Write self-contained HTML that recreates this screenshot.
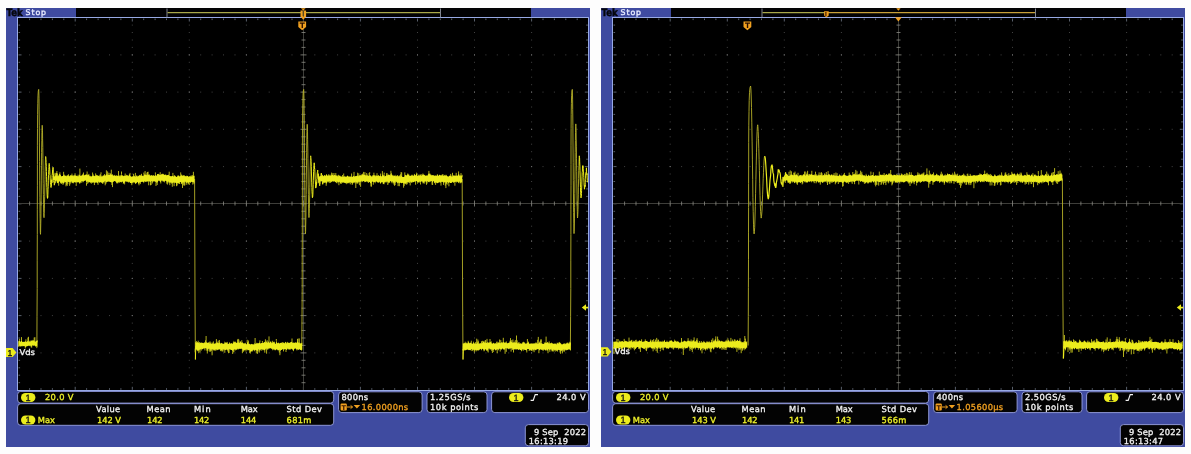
<!DOCTYPE html>
<html lang="en"><head><meta charset="utf-8"><title>Vds switching waveforms</title>
<style>
html,body{margin:0;padding:0;background:#fdfdfd;}
body{width:1191px;height:454px;overflow:hidden;font-family:"Liberation Sans","DejaVu Sans",sans-serif;}
svg{display:block;position:absolute;left:0;top:0;will-change:transform;}
</style></head><body>
<svg width="1191" height="454" viewBox="0 0 1191 454" text-rendering="geometricPrecision">
<g transform="translate(0,0)">
<rect x="6" y="8" width="584" height="439" fill="#3f4ba0"/>
<rect x="76" y="8" width="455" height="10" fill="#020204"/>
<rect x="17.5" y="17.5" width="571" height="373" fill="#000" stroke="#98aae6" stroke-width="1"/>
<text x="6.5" y="16.3" font-family="'DejaVu Sans','Liberation Sans',sans-serif" font-weight="bold" font-size="10.2" fill="#05060c" stroke="#05060c" stroke-width="0.45" textLength="16.2" lengthAdjust="spacingAndGlyphs">Tek</text>
<text x="25.6" y="15" font-family="'DejaVu Sans','Liberation Sans',sans-serif" font-size="7.8" fill="#e8ecff" stroke="#e8ecff" stroke-width="0.35" textLength="20.4" lengthAdjust="spacing">Stop</text>
<path d="M74.7 25.1h1M74.7 32.5h1M74.7 40h1M74.7 47.4h1M74.7 54.9h1M74.7 62.3h1M74.7 69.8h1M74.7 77.2h1M74.7 84.7h1M74.7 92.1h1M74.7 99.6h1M74.7 107h1M74.7 114.4h1M74.7 121.9h1M74.7 129.3h1M74.7 136.8h1M74.7 144.2h1M74.7 151.7h1M74.7 159.2h1M74.7 166.6h1M74.7 174h1M74.7 181.5h1M74.7 188.9h1M74.7 196.4h1M74.7 203.8h1M74.7 211.3h1M74.7 218.8h1M74.7 226.2h1M74.7 233.7h1M74.7 241.1h1M74.7 248.5h1M74.7 256h1M74.7 263.4h1M74.7 270.9h1M74.7 278.4h1M74.7 285.8h1M74.7 293.2h1M74.7 300.7h1M74.7 308.2h1M74.7 315.6h1M74.7 323.1h1M74.7 330.5h1M74.7 338h1M74.7 345.4h1M74.7 352.9h1M74.7 360.3h1M74.7 367.8h1M74.7 375.2h1M74.7 382.7h1M131.8 25.1h1M131.8 32.5h1M131.8 40h1M131.8 47.4h1M131.8 54.9h1M131.8 62.3h1M131.8 69.8h1M131.8 77.2h1M131.8 84.7h1M131.8 92.1h1M131.8 99.6h1M131.8 107h1M131.8 114.4h1M131.8 121.9h1M131.8 129.3h1M131.8 136.8h1M131.8 144.2h1M131.8 151.7h1M131.8 159.2h1M131.8 166.6h1M131.8 174h1M131.8 181.5h1M131.8 188.9h1M131.8 196.4h1M131.8 203.8h1M131.8 211.3h1M131.8 218.8h1M131.8 226.2h1M131.8 233.7h1M131.8 241.1h1M131.8 248.5h1M131.8 256h1M131.8 263.4h1M131.8 270.9h1M131.8 278.4h1M131.8 285.8h1M131.8 293.2h1M131.8 300.7h1M131.8 308.2h1M131.8 315.6h1M131.8 323.1h1M131.8 330.5h1M131.8 338h1M131.8 345.4h1M131.8 352.9h1M131.8 360.3h1M131.8 367.8h1M131.8 375.2h1M131.8 382.7h1M188.8 25.1h1M188.8 32.5h1M188.8 40h1M188.8 47.4h1M188.8 54.9h1M188.8 62.3h1M188.8 69.8h1M188.8 77.2h1M188.8 84.7h1M188.8 92.1h1M188.8 99.6h1M188.8 107h1M188.8 114.4h1M188.8 121.9h1M188.8 129.3h1M188.8 136.8h1M188.8 144.2h1M188.8 151.7h1M188.8 159.2h1M188.8 166.6h1M188.8 174h1M188.8 181.5h1M188.8 188.9h1M188.8 196.4h1M188.8 203.8h1M188.8 211.3h1M188.8 218.8h1M188.8 226.2h1M188.8 233.7h1M188.8 241.1h1M188.8 248.5h1M188.8 256h1M188.8 263.4h1M188.8 270.9h1M188.8 278.4h1M188.8 285.8h1M188.8 293.2h1M188.8 300.7h1M188.8 308.2h1M188.8 315.6h1M188.8 323.1h1M188.8 330.5h1M188.8 338h1M188.8 345.4h1M188.8 352.9h1M188.8 360.3h1M188.8 367.8h1M188.8 375.2h1M188.8 382.7h1M245.9 25.1h1M245.9 32.5h1M245.9 40h1M245.9 47.4h1M245.9 54.9h1M245.9 62.3h1M245.9 69.8h1M245.9 77.2h1M245.9 84.7h1M245.9 92.1h1M245.9 99.6h1M245.9 107h1M245.9 114.4h1M245.9 121.9h1M245.9 129.3h1M245.9 136.8h1M245.9 144.2h1M245.9 151.7h1M245.9 159.2h1M245.9 166.6h1M245.9 174h1M245.9 181.5h1M245.9 188.9h1M245.9 196.4h1M245.9 203.8h1M245.9 211.3h1M245.9 218.8h1M245.9 226.2h1M245.9 233.7h1M245.9 241.1h1M245.9 248.5h1M245.9 256h1M245.9 263.4h1M245.9 270.9h1M245.9 278.4h1M245.9 285.8h1M245.9 293.2h1M245.9 300.7h1M245.9 308.2h1M245.9 315.6h1M245.9 323.1h1M245.9 330.5h1M245.9 338h1M245.9 345.4h1M245.9 352.9h1M245.9 360.3h1M245.9 367.8h1M245.9 375.2h1M245.9 382.7h1M359.9 25.1h1M359.9 32.5h1M359.9 40h1M359.9 47.4h1M359.9 54.9h1M359.9 62.3h1M359.9 69.8h1M359.9 77.2h1M359.9 84.7h1M359.9 92.1h1M359.9 99.6h1M359.9 107h1M359.9 114.4h1M359.9 121.9h1M359.9 129.3h1M359.9 136.8h1M359.9 144.2h1M359.9 151.7h1M359.9 159.2h1M359.9 166.6h1M359.9 174h1M359.9 181.5h1M359.9 188.9h1M359.9 196.4h1M359.9 203.8h1M359.9 211.3h1M359.9 218.8h1M359.9 226.2h1M359.9 233.7h1M359.9 241.1h1M359.9 248.5h1M359.9 256h1M359.9 263.4h1M359.9 270.9h1M359.9 278.4h1M359.9 285.8h1M359.9 293.2h1M359.9 300.7h1M359.9 308.2h1M359.9 315.6h1M359.9 323.1h1M359.9 330.5h1M359.9 338h1M359.9 345.4h1M359.9 352.9h1M359.9 360.3h1M359.9 367.8h1M359.9 375.2h1M359.9 382.7h1M417 25.1h1M417 32.5h1M417 40h1M417 47.4h1M417 54.9h1M417 62.3h1M417 69.8h1M417 77.2h1M417 84.7h1M417 92.1h1M417 99.6h1M417 107h1M417 114.4h1M417 121.9h1M417 129.3h1M417 136.8h1M417 144.2h1M417 151.7h1M417 159.2h1M417 166.6h1M417 174h1M417 181.5h1M417 188.9h1M417 196.4h1M417 203.8h1M417 211.3h1M417 218.8h1M417 226.2h1M417 233.7h1M417 241.1h1M417 248.5h1M417 256h1M417 263.4h1M417 270.9h1M417 278.4h1M417 285.8h1M417 293.2h1M417 300.7h1M417 308.2h1M417 315.6h1M417 323.1h1M417 330.5h1M417 338h1M417 345.4h1M417 352.9h1M417 360.3h1M417 367.8h1M417 375.2h1M417 382.7h1M474 25.1h1M474 32.5h1M474 40h1M474 47.4h1M474 54.9h1M474 62.3h1M474 69.8h1M474 77.2h1M474 84.7h1M474 92.1h1M474 99.6h1M474 107h1M474 114.4h1M474 121.9h1M474 129.3h1M474 136.8h1M474 144.2h1M474 151.7h1M474 159.2h1M474 166.6h1M474 174h1M474 181.5h1M474 188.9h1M474 196.4h1M474 203.8h1M474 211.3h1M474 218.8h1M474 226.2h1M474 233.7h1M474 241.1h1M474 248.5h1M474 256h1M474 263.4h1M474 270.9h1M474 278.4h1M474 285.8h1M474 293.2h1M474 300.7h1M474 308.2h1M474 315.6h1M474 323.1h1M474 330.5h1M474 338h1M474 345.4h1M474 352.9h1M474 360.3h1M474 367.8h1M474 375.2h1M474 382.7h1M531.1 25.1h1M531.1 32.5h1M531.1 40h1M531.1 47.4h1M531.1 54.9h1M531.1 62.3h1M531.1 69.8h1M531.1 77.2h1M531.1 84.7h1M531.1 92.1h1M531.1 99.6h1M531.1 107h1M531.1 114.4h1M531.1 121.9h1M531.1 129.3h1M531.1 136.8h1M531.1 144.2h1M531.1 151.7h1M531.1 159.2h1M531.1 166.6h1M531.1 174h1M531.1 181.5h1M531.1 188.9h1M531.1 196.4h1M531.1 203.8h1M531.1 211.3h1M531.1 218.8h1M531.1 226.2h1M531.1 233.7h1M531.1 241.1h1M531.1 248.5h1M531.1 256h1M531.1 263.4h1M531.1 270.9h1M531.1 278.4h1M531.1 285.8h1M531.1 293.2h1M531.1 300.7h1M531.1 308.2h1M531.1 315.6h1M531.1 323.1h1M531.1 330.5h1M531.1 338h1M531.1 345.4h1M531.1 352.9h1M531.1 360.3h1M531.1 367.8h1M531.1 375.2h1M531.1 382.7h1M29.1 54.9h1M40.5 54.9h1M51.9 54.9h1M63.3 54.9h1M74.7 54.9h1M86.1 54.9h1M97.6 54.9h1M109 54.9h1M120.4 54.9h1M131.8 54.9h1M143.2 54.9h1M154.6 54.9h1M166 54.9h1M177.4 54.9h1M188.8 54.9h1M200.2 54.9h1M211.6 54.9h1M223 54.9h1M234.5 54.9h1M245.9 54.9h1M257.3 54.9h1M268.7 54.9h1M280.1 54.9h1M291.5 54.9h1M302.9 54.9h1M314.3 54.9h1M325.7 54.9h1M337.1 54.9h1M348.5 54.9h1M359.9 54.9h1M371.3 54.9h1M382.8 54.9h1M394.2 54.9h1M405.6 54.9h1M417 54.9h1M428.4 54.9h1M439.8 54.9h1M451.2 54.9h1M462.6 54.9h1M474 54.9h1M485.4 54.9h1M496.8 54.9h1M508.2 54.9h1M519.7 54.9h1M531.1 54.9h1M542.5 54.9h1M553.9 54.9h1M565.3 54.9h1M576.7 54.9h1M29.1 92.1h1M40.5 92.1h1M51.9 92.1h1M63.3 92.1h1M74.7 92.1h1M86.1 92.1h1M97.6 92.1h1M109 92.1h1M120.4 92.1h1M131.8 92.1h1M143.2 92.1h1M154.6 92.1h1M166 92.1h1M177.4 92.1h1M188.8 92.1h1M200.2 92.1h1M211.6 92.1h1M223 92.1h1M234.5 92.1h1M245.9 92.1h1M257.3 92.1h1M268.7 92.1h1M280.1 92.1h1M291.5 92.1h1M302.9 92.1h1M314.3 92.1h1M325.7 92.1h1M337.1 92.1h1M348.5 92.1h1M359.9 92.1h1M371.3 92.1h1M382.8 92.1h1M394.2 92.1h1M405.6 92.1h1M417 92.1h1M428.4 92.1h1M439.8 92.1h1M451.2 92.1h1M462.6 92.1h1M474 92.1h1M485.4 92.1h1M496.8 92.1h1M508.2 92.1h1M519.7 92.1h1M531.1 92.1h1M542.5 92.1h1M553.9 92.1h1M565.3 92.1h1M576.7 92.1h1M29.1 129.3h1M40.5 129.3h1M51.9 129.3h1M63.3 129.3h1M74.7 129.3h1M86.1 129.3h1M97.6 129.3h1M109 129.3h1M120.4 129.3h1M131.8 129.3h1M143.2 129.3h1M154.6 129.3h1M166 129.3h1M177.4 129.3h1M188.8 129.3h1M200.2 129.3h1M211.6 129.3h1M223 129.3h1M234.5 129.3h1M245.9 129.3h1M257.3 129.3h1M268.7 129.3h1M280.1 129.3h1M291.5 129.3h1M302.9 129.3h1M314.3 129.3h1M325.7 129.3h1M337.1 129.3h1M348.5 129.3h1M359.9 129.3h1M371.3 129.3h1M382.8 129.3h1M394.2 129.3h1M405.6 129.3h1M417 129.3h1M428.4 129.3h1M439.8 129.3h1M451.2 129.3h1M462.6 129.3h1M474 129.3h1M485.4 129.3h1M496.8 129.3h1M508.2 129.3h1M519.7 129.3h1M531.1 129.3h1M542.5 129.3h1M553.9 129.3h1M565.3 129.3h1M576.7 129.3h1M29.1 166.6h1M40.5 166.6h1M51.9 166.6h1M63.3 166.6h1M74.7 166.6h1M86.1 166.6h1M97.6 166.6h1M109 166.6h1M120.4 166.6h1M131.8 166.6h1M143.2 166.6h1M154.6 166.6h1M166 166.6h1M177.4 166.6h1M188.8 166.6h1M200.2 166.6h1M211.6 166.6h1M223 166.6h1M234.5 166.6h1M245.9 166.6h1M257.3 166.6h1M268.7 166.6h1M280.1 166.6h1M291.5 166.6h1M302.9 166.6h1M314.3 166.6h1M325.7 166.6h1M337.1 166.6h1M348.5 166.6h1M359.9 166.6h1M371.3 166.6h1M382.8 166.6h1M394.2 166.6h1M405.6 166.6h1M417 166.6h1M428.4 166.6h1M439.8 166.6h1M451.2 166.6h1M462.6 166.6h1M474 166.6h1M485.4 166.6h1M496.8 166.6h1M508.2 166.6h1M519.7 166.6h1M531.1 166.6h1M542.5 166.6h1M553.9 166.6h1M565.3 166.6h1M576.7 166.6h1M29.1 241.1h1M40.5 241.1h1M51.9 241.1h1M63.3 241.1h1M74.7 241.1h1M86.1 241.1h1M97.6 241.1h1M109 241.1h1M120.4 241.1h1M131.8 241.1h1M143.2 241.1h1M154.6 241.1h1M166 241.1h1M177.4 241.1h1M188.8 241.1h1M200.2 241.1h1M211.6 241.1h1M223 241.1h1M234.5 241.1h1M245.9 241.1h1M257.3 241.1h1M268.7 241.1h1M280.1 241.1h1M291.5 241.1h1M302.9 241.1h1M314.3 241.1h1M325.7 241.1h1M337.1 241.1h1M348.5 241.1h1M359.9 241.1h1M371.3 241.1h1M382.8 241.1h1M394.2 241.1h1M405.6 241.1h1M417 241.1h1M428.4 241.1h1M439.8 241.1h1M451.2 241.1h1M462.6 241.1h1M474 241.1h1M485.4 241.1h1M496.8 241.1h1M508.2 241.1h1M519.7 241.1h1M531.1 241.1h1M542.5 241.1h1M553.9 241.1h1M565.3 241.1h1M576.7 241.1h1M29.1 278.4h1M40.5 278.4h1M51.9 278.4h1M63.3 278.4h1M74.7 278.4h1M86.1 278.4h1M97.6 278.4h1M109 278.4h1M120.4 278.4h1M131.8 278.4h1M143.2 278.4h1M154.6 278.4h1M166 278.4h1M177.4 278.4h1M188.8 278.4h1M200.2 278.4h1M211.6 278.4h1M223 278.4h1M234.5 278.4h1M245.9 278.4h1M257.3 278.4h1M268.7 278.4h1M280.1 278.4h1M291.5 278.4h1M302.9 278.4h1M314.3 278.4h1M325.7 278.4h1M337.1 278.4h1M348.5 278.4h1M359.9 278.4h1M371.3 278.4h1M382.8 278.4h1M394.2 278.4h1M405.6 278.4h1M417 278.4h1M428.4 278.4h1M439.8 278.4h1M451.2 278.4h1M462.6 278.4h1M474 278.4h1M485.4 278.4h1M496.8 278.4h1M508.2 278.4h1M519.7 278.4h1M531.1 278.4h1M542.5 278.4h1M553.9 278.4h1M565.3 278.4h1M576.7 278.4h1M29.1 315.6h1M40.5 315.6h1M51.9 315.6h1M63.3 315.6h1M74.7 315.6h1M86.1 315.6h1M97.6 315.6h1M109 315.6h1M120.4 315.6h1M131.8 315.6h1M143.2 315.6h1M154.6 315.6h1M166 315.6h1M177.4 315.6h1M188.8 315.6h1M200.2 315.6h1M211.6 315.6h1M223 315.6h1M234.5 315.6h1M245.9 315.6h1M257.3 315.6h1M268.7 315.6h1M280.1 315.6h1M291.5 315.6h1M302.9 315.6h1M314.3 315.6h1M325.7 315.6h1M337.1 315.6h1M348.5 315.6h1M359.9 315.6h1M371.3 315.6h1M382.8 315.6h1M394.2 315.6h1M405.6 315.6h1M417 315.6h1M428.4 315.6h1M439.8 315.6h1M451.2 315.6h1M462.6 315.6h1M474 315.6h1M485.4 315.6h1M496.8 315.6h1M508.2 315.6h1M519.7 315.6h1M531.1 315.6h1M542.5 315.6h1M553.9 315.6h1M565.3 315.6h1M576.7 315.6h1M29.1 352.9h1M40.5 352.9h1M51.9 352.9h1M63.3 352.9h1M74.7 352.9h1M86.1 352.9h1M97.6 352.9h1M109 352.9h1M120.4 352.9h1M131.8 352.9h1M143.2 352.9h1M154.6 352.9h1M166 352.9h1M177.4 352.9h1M188.8 352.9h1M200.2 352.9h1M211.6 352.9h1M223 352.9h1M234.5 352.9h1M245.9 352.9h1M257.3 352.9h1M268.7 352.9h1M280.1 352.9h1M291.5 352.9h1M302.9 352.9h1M314.3 352.9h1M325.7 352.9h1M337.1 352.9h1M348.5 352.9h1M359.9 352.9h1M371.3 352.9h1M382.8 352.9h1M394.2 352.9h1M405.6 352.9h1M417 352.9h1M428.4 352.9h1M439.8 352.9h1M451.2 352.9h1M462.6 352.9h1M474 352.9h1M485.4 352.9h1M496.8 352.9h1M508.2 352.9h1M519.7 352.9h1M531.1 352.9h1M542.5 352.9h1M553.9 352.9h1M565.3 352.9h1M576.7 352.9h1" stroke="#424242" stroke-width="1" fill="none"/>
<path d="M74.7 54.9h1M74.7 92.1h1M74.7 129.3h1M74.7 166.6h1M74.7 203.8h1M74.7 241.1h1M74.7 278.4h1M74.7 315.6h1M74.7 352.9h1M131.8 54.9h1M131.8 92.1h1M131.8 129.3h1M131.8 166.6h1M131.8 203.8h1M131.8 241.1h1M131.8 278.4h1M131.8 315.6h1M131.8 352.9h1M188.8 54.9h1M188.8 92.1h1M188.8 129.3h1M188.8 166.6h1M188.8 203.8h1M188.8 241.1h1M188.8 278.4h1M188.8 315.6h1M188.8 352.9h1M245.9 54.9h1M245.9 92.1h1M245.9 129.3h1M245.9 166.6h1M245.9 203.8h1M245.9 241.1h1M245.9 278.4h1M245.9 315.6h1M245.9 352.9h1M302.9 54.9h1M302.9 92.1h1M302.9 129.3h1M302.9 166.6h1M302.9 203.8h1M302.9 241.1h1M302.9 278.4h1M302.9 315.6h1M302.9 352.9h1M359.9 54.9h1M359.9 92.1h1M359.9 129.3h1M359.9 166.6h1M359.9 203.8h1M359.9 241.1h1M359.9 278.4h1M359.9 315.6h1M359.9 352.9h1M417 54.9h1M417 92.1h1M417 129.3h1M417 166.6h1M417 203.8h1M417 241.1h1M417 278.4h1M417 315.6h1M417 352.9h1M474 54.9h1M474 92.1h1M474 129.3h1M474 166.6h1M474 203.8h1M474 241.1h1M474 278.4h1M474 315.6h1M474 352.9h1M531.1 54.9h1M531.1 92.1h1M531.1 129.3h1M531.1 166.6h1M531.1 203.8h1M531.1 241.1h1M531.1 278.4h1M531.1 315.6h1M531.1 352.9h1" stroke="#707070" stroke-width="1" fill="none"/>
<path d="M29.6 18.5v1.6M29.6 389.8v-1.6M18.5 25.1h1.6M587.8 25.1h-1.6M41 18.5v1.6M41 389.8v-1.6M18.5 32.5h1.6M587.8 32.5h-1.6M52.4 18.5v1.6M52.4 389.8v-1.6M18.5 40h1.6M587.8 40h-1.6M63.8 18.5v1.6M63.8 389.8v-1.6M18.5 47.4h1.6M587.8 47.4h-1.6M75.2 18.5v3M75.2 389.8v-3M18.5 54.9h3M587.8 54.9h-3M86.6 18.5v1.6M86.6 389.8v-1.6M18.5 62.3h1.6M587.8 62.3h-1.6M98.1 18.5v1.6M98.1 389.8v-1.6M18.5 69.8h1.6M587.8 69.8h-1.6M109.5 18.5v1.6M109.5 389.8v-1.6M18.5 77.2h1.6M587.8 77.2h-1.6M120.9 18.5v1.6M120.9 389.8v-1.6M18.5 84.7h1.6M587.8 84.7h-1.6M132.3 18.5v3M132.3 389.8v-3M18.5 92.1h3M587.8 92.1h-3M143.7 18.5v1.6M143.7 389.8v-1.6M18.5 99.6h1.6M587.8 99.6h-1.6M155.1 18.5v1.6M155.1 389.8v-1.6M18.5 107h1.6M587.8 107h-1.6M166.5 18.5v1.6M166.5 389.8v-1.6M18.5 114.4h1.6M587.8 114.4h-1.6M177.9 18.5v1.6M177.9 389.8v-1.6M18.5 121.9h1.6M587.8 121.9h-1.6M189.3 18.5v3M189.3 389.8v-3M18.5 129.3h3M587.8 129.3h-3M200.7 18.5v1.6M200.7 389.8v-1.6M18.5 136.8h1.6M587.8 136.8h-1.6M212.1 18.5v1.6M212.1 389.8v-1.6M18.5 144.2h1.6M587.8 144.2h-1.6M223.5 18.5v1.6M223.5 389.8v-1.6M18.5 151.7h1.6M587.8 151.7h-1.6M235 18.5v1.6M235 389.8v-1.6M18.5 159.2h1.6M587.8 159.2h-1.6M246.4 18.5v3M246.4 389.8v-3M18.5 166.6h3M587.8 166.6h-3M257.8 18.5v1.6M257.8 389.8v-1.6M18.5 174h1.6M587.8 174h-1.6M269.2 18.5v1.6M269.2 389.8v-1.6M18.5 181.5h1.6M587.8 181.5h-1.6M280.6 18.5v1.6M280.6 389.8v-1.6M18.5 188.9h1.6M587.8 188.9h-1.6M292 18.5v1.6M292 389.8v-1.6M18.5 196.4h1.6M587.8 196.4h-1.6M303.4 18.5v3M303.4 389.8v-3M18.5 203.8h3M587.8 203.8h-3M314.8 18.5v1.6M314.8 389.8v-1.6M18.5 211.3h1.6M587.8 211.3h-1.6M326.2 18.5v1.6M326.2 389.8v-1.6M18.5 218.8h1.6M587.8 218.8h-1.6M337.6 18.5v1.6M337.6 389.8v-1.6M18.5 226.2h1.6M587.8 226.2h-1.6M349 18.5v1.6M349 389.8v-1.6M18.5 233.7h1.6M587.8 233.7h-1.6M360.4 18.5v3M360.4 389.8v-3M18.5 241.1h3M587.8 241.1h-3M371.8 18.5v1.6M371.8 389.8v-1.6M18.5 248.5h1.6M587.8 248.5h-1.6M383.3 18.5v1.6M383.3 389.8v-1.6M18.5 256h1.6M587.8 256h-1.6M394.7 18.5v1.6M394.7 389.8v-1.6M18.5 263.4h1.6M587.8 263.4h-1.6M406.1 18.5v1.6M406.1 389.8v-1.6M18.5 270.9h1.6M587.8 270.9h-1.6M417.5 18.5v3M417.5 389.8v-3M18.5 278.4h3M587.8 278.4h-3M428.9 18.5v1.6M428.9 389.8v-1.6M18.5 285.8h1.6M587.8 285.8h-1.6M440.3 18.5v1.6M440.3 389.8v-1.6M18.5 293.2h1.6M587.8 293.2h-1.6M451.7 18.5v1.6M451.7 389.8v-1.6M18.5 300.7h1.6M587.8 300.7h-1.6M463.1 18.5v1.6M463.1 389.8v-1.6M18.5 308.2h1.6M587.8 308.2h-1.6M474.5 18.5v3M474.5 389.8v-3M18.5 315.6h3M587.8 315.6h-3M485.9 18.5v1.6M485.9 389.8v-1.6M18.5 323.1h1.6M587.8 323.1h-1.6M497.3 18.5v1.6M497.3 389.8v-1.6M18.5 330.5h1.6M587.8 330.5h-1.6M508.7 18.5v1.6M508.7 389.8v-1.6M18.5 338h1.6M587.8 338h-1.6M520.2 18.5v1.6M520.2 389.8v-1.6M18.5 345.4h1.6M587.8 345.4h-1.6M531.6 18.5v3M531.6 389.8v-3M18.5 352.9h3M587.8 352.9h-3M543 18.5v1.6M543 389.8v-1.6M18.5 360.3h1.6M587.8 360.3h-1.6M554.4 18.5v1.6M554.4 389.8v-1.6M18.5 367.8h1.6M587.8 367.8h-1.6M565.8 18.5v1.6M565.8 389.8v-1.6M18.5 375.2h1.6M587.8 375.2h-1.6M577.2 18.5v1.6M577.2 389.8v-1.6M18.5 382.7h1.6M587.8 382.7h-1.6" stroke="#707888" stroke-width="0.8" fill="none"/>
<path d="M18 203.5H588M303.5 18V390" stroke="#3e3e3a" stroke-width="1" fill="none"/>
<path d="M29.6 201.5v4M301.5 25.1h4M41 201.5v4M301.5 32.5h4M52.4 201.5v4M301.5 40h4M63.8 201.5v4M301.5 47.4h4M75.2 200.5v6M300.5 54.9h6M86.6 201.5v4M301.5 62.3h4M98.1 201.5v4M301.5 69.8h4M109.5 201.5v4M301.5 77.2h4M120.9 201.5v4M301.5 84.7h4M132.3 200.5v6M300.5 92.1h6M143.7 201.5v4M301.5 99.6h4M155.1 201.5v4M301.5 107h4M166.5 201.5v4M301.5 114.4h4M177.9 201.5v4M301.5 121.9h4M189.3 200.5v6M300.5 129.3h6M200.7 201.5v4M301.5 136.8h4M212.1 201.5v4M301.5 144.2h4M223.5 201.5v4M301.5 151.7h4M235 201.5v4M301.5 159.2h4M246.4 200.5v6M300.5 166.6h6M257.8 201.5v4M301.5 174h4M269.2 201.5v4M301.5 181.5h4M280.6 201.5v4M301.5 188.9h4M292 201.5v4M301.5 196.4h4M303.4 200.5v6M300.5 203.8h6M314.8 201.5v4M301.5 211.3h4M326.2 201.5v4M301.5 218.8h4M337.6 201.5v4M301.5 226.2h4M349 201.5v4M301.5 233.7h4M360.4 200.5v6M300.5 241.1h6M371.8 201.5v4M301.5 248.5h4M383.3 201.5v4M301.5 256h4M394.7 201.5v4M301.5 263.4h4M406.1 201.5v4M301.5 270.9h4M417.5 200.5v6M300.5 278.4h6M428.9 201.5v4M301.5 285.8h4M440.3 201.5v4M301.5 293.2h4M451.7 201.5v4M301.5 300.7h4M463.1 201.5v4M301.5 308.2h4M474.5 200.5v6M300.5 315.6h6M485.9 201.5v4M301.5 323.1h4M497.3 201.5v4M301.5 330.5h4M508.7 201.5v4M301.5 338h4M520.2 201.5v4M301.5 345.4h4M531.6 200.5v6M300.5 352.9h6M543 201.5v4M301.5 360.3h4M554.4 201.5v4M301.5 367.8h4M565.8 201.5v4M301.5 375.2h4M577.2 201.5v4M301.5 382.7h4" stroke="#8a8a84" stroke-width="0.8" fill="none"/>
<path d="M167 8.5V17.5M440.5 8.5V17.5" stroke="#9094a0" stroke-width="0.9" fill="none"/>
<path d="M167.5 12.6H440" stroke="#a9a848" stroke-width="1.2" fill="none"/>
<path d="M300.5 10.4h5.6v6l-2.8 3.4l-2.8-3.4z" fill="#f0a020"/>
<path d="M302.6 10.4h1.4v5.6l-0.7 0.9l-0.7-0.9z" fill="#5a4a20"/>
<path d="M300.9 8.2h4.8l-2.4 2.2z" fill="#f0a020"/>
<path d="M298.3 21.6h7.8v5.4l-3.9 3.2l-3.9-3.2z" fill="#f0a020"/>
<text x="302.2" y="28.2" text-anchor="middle" font-family="'DejaVu Sans','Liberation Sans',sans-serif" font-weight="bold" font-size="7.4" fill="#2a1000">T</text>
<polyline points="36.9,345.5 37,316.8 37.2,288.5 37.2,260.9 37.3,234.4 37.3,209.2 37.4,185.8 37.4,164.4 37.4,145.2 37.5,128.6 37.6,114.7 37.8,103.7 38,95.8 38.3,91 38.7,89.4 38.8,91.2 39,98.3 39.1,109.9 39.3,125.2 39.4,142.1 39.6,161.5 39.7,180.8 39.9,197.8 40,213.6 40.2,223.7 40.3,232.3 40.5,234.3 40.6,232.2 40.7,227 40.9,218.5 41,206.1 41.2,194.1 41.3,180.1 41.5,165.3 41.6,152.5 41.8,140.7 41.9,132.4 42.1,127.5 42.2,125.3 42.3,126.3 42.5,130.8 42.6,138.9 42.8,147.5 42.9,158.3 43.1,170.7 43.2,183.7 43.4,194.4 43.5,204.6 43.7,212.3 43.8,216.8 44,217.7 44.1,217.1 44.2,213.7 44.4,208.1 44.5,202.8 44.7,196.2 44.8,187.1 45,179.3 45.1,171.3 45.3,165.5 45.4,160.1 45.6,156.4 45.7,156.5" fill="none" stroke="#b6b028" stroke-width="0.9" stroke-linejoin="round"/>
<polyline points="194.6,179 195,300 195.4,359.5" fill="none" stroke="#b6b028" stroke-width="0.9" stroke-linejoin="round"/>
<polyline points="301.8,345.5 302,316.8 302.2,288.5 302.2,260.9 302.3,234.4 302.3,209.2 302.4,185.8 302.4,164.4 302.4,145.2 302.5,128.6 302.6,114.7 302.8,103.7 303,95.8 303.3,91 303.7,89.4 303.8,92.2 304,99.5 304.1,110.5 304.3,124.3 304.4,142.3 304.6,161.1 304.7,179.3 304.9,198 305,212.9 305.2,225 305.3,231.7 305.4,233.8 305.6,231.7 305.7,226.8 305.9,217.8 306,207.1 306.2,194.5 306.3,179.9 306.5,165.8 306.6,152.7 306.8,141.2 306.9,132.6 307.1,127 307.2,124.3 307.3,126 307.5,131.2 307.6,139.3 307.8,148.1 307.9,158.4 308.1,171 308.2,184.9 308.4,194.3 308.5,204.7 308.7,212 308.8,215.9 308.9,217.6 309.1,217.3 309.2,213.6 309.4,208.8 309.5,202.9 309.7,195.1 309.8,187.6 310,179 310.1,171.8 310.3,165.1 310.4,160.6 310.6,157.5 310.7,155.8" fill="none" stroke="#b6b028" stroke-width="0.9" stroke-linejoin="round"/>
<polyline points="462.2,179 462.6,300 463,359.5" fill="none" stroke="#b6b028" stroke-width="0.9" stroke-linejoin="round"/>
<polyline points="570.4,345.5 570.6,316.8 570.8,288.5 570.8,260.9 570.9,234.4 570.9,209.2 571,185.8 571,164.4 571,145.2 571.1,128.6 571.2,114.7 571.4,103.7 571.6,95.8 571.9,91 572.3,89.4 572.4,92 572.6,99.1 572.7,109.7 572.9,125.2 573,144 573.2,162.3 573.3,180.3 573.5,198 573.6,212.5 573.8,223.9 573.9,231 574,233.6 574.2,231.7 574.3,227 574.5,218.1 574.6,207.3 574.8,193.7 574.9,179.6 575.1,165.5 575.2,152.6 575.4,140.5 575.5,132.7 575.7,126.9 575.8,123.9 575.9,126.5 576.1,130.2 576.2,138 576.4,146.9 576.5,158.8 576.7,171.3 576.8,183.1 577,195.1 577.1,204.1 577.3,211.5 577.4,216.2 577.5,218 577.7,216.3 577.8,214.4 578,209.4 578.1,201.9 578.3,194.8 578.4,187.2 578.6,178.3 578.7,170.5 578.9,165.5 579,159.9 579.2,156.9 579.3,155.8" fill="none" stroke="#b6b028" stroke-width="0.9" stroke-linejoin="round"/>
<polyline points="45.7,156.5 45.8,156.9 46,159.6 46.1,162.6 46.3,166.4 46.4,171.6 46.6,176.7 46.7,182.3 46.9,187.5 47,192 47.2,196 47.3,197.4 47.5,198.4 47.6,196.4 47.7,197.6 47.9,194.2 48,189.2 48.2,186.5 48.3,180.8 48.5,175.1 48.6,174.4 48.8,169.3 48.9,167.3 49.1,164.4 49.2,163.4 49.3,164.3 49.5,166.5 49.6,168 49.8,171.1 49.9,174.9 50.1,175.2 50.2,178.1 50.4,182.2 50.5,184.6 50.7,185.3 50.8,187.3 51,187.5 51.1,187.5 51.2,186.8 51.4,186.6 51.5,180.8 51.7,179.8 51.8,181.6 52,177.4 52.1,175.4 52.3,174 52.4,173 52.6,170.9 52.7,170.2 52.8,172.9 53,167.3 53.1,172.3 53.3,175.2 53.4,174.5 53.6,179.7 53.7,178.6 53.9,181.9 54,181.3 54.2,183.5 54.3,185.2 54.5,184.1 54.6,183.6 54.7,183.9 54.9,181.8 55,182.6 55.2,181.3 55.3,179.3 55.5,181 55.6,176.8 55.8,175.3 55.9,175.6 56.1,174.9 56.2,172.9 56.3,175.9 56.5,173.9 56.6,175.6 56.8,175.7 56.9,178.2 57.1,179.3 57.2,180.1 57.4,179.3 57.5,179.3 57.7,181.5 57.8,182.9 58,182.8 58.1,180.8 58.2,180.6 58.4,181.4 58.5,179.1 58.7,177.8 58.8,177.7 59,176.3 59.1,177.5 59.3,177.3 59.4,176.7 59.6,176.1 59.7,174.3 59.8,178.4 60,178.5 60.1,176.8 60.3,175.2 60.4,177.9 60.6,178.7 60.7,180.1 60.9,180.1 61,179.9 61.2,183.3 61.3,179.7 61.5,182.7 61.6,179.1 61.7,181.6 61.9,180.2 62,180.9 62.2,179.1 62.3,177.2 62.5,176.1 62.6,178.3 62.8,178.6 62.9,178.1 63.1,177.5 63.2,178.7 63.3,179.2 63.5,175.6 63.6,178.1 63.8,176.4 63.9,180.9 64.1,179.4 64.2,179 64.4,177.7 64.5,178.6 64.7,179.5 64.8,178.4 65,176.5" fill="none" stroke="#ecec1c" stroke-width="1.0" stroke-linejoin="round"/>
<polyline points="195.4,359.5 195.8,346" fill="none" stroke="#ecec1c" stroke-width="1.0" stroke-linejoin="round"/>
<polyline points="310.7,155.8 310.8,157.3 311,158.5 311.1,161.2 311.3,166.7 311.4,172 311.6,177 311.7,182.2 311.9,187.4 312,191.8 312.2,194.4 312.3,197 312.4,197.7 312.6,197 312.7,197 312.9,194 313,189.1 313.2,184.7 313.3,180.2 313.5,175 313.6,171.4 313.8,168.7 313.9,165.7 314.1,165.2 314.2,162.8 314.3,165.1 314.5,168.6 314.6,168.1 314.8,169.5 314.9,172.1 315.1,177 315.2,179.9 315.4,182.1 315.5,184.3 315.7,188.1 315.8,186.7 315.9,187.4 316.1,187.1 316.2,181.9 316.4,185.3 316.5,182.1 316.7,183.4 316.8,179.2 317,178.8 317.1,175.2 317.3,172.4 317.4,172.5 317.6,171.5 317.7,170.1 317.8,172.7 318,173.6 318.1,176.3 318.3,173.8 318.4,177.6 318.6,179.1 318.7,179.4 318.9,179.6 319,182.3 319.2,180.9 319.3,183.4 319.4,184.3 319.6,184.5 319.7,185.7 319.9,183.1 320,183.4 320.2,180.5 320.3,179.7 320.5,177.9 320.6,177.2 320.8,176 320.9,176.3 321.1,174.8 321.2,175 321.3,173.1 321.5,175.5 321.6,177.3 321.8,177.3 321.9,179.3 322.1,179.4 322.2,179.7 322.4,181 322.5,181.4 322.7,184.3 322.8,184.2 322.9,181.5 323.1,182.6 323.2,182.6 323.4,180.8 323.5,180.1 323.7,181.5 323.8,181.8 324,178.8 324.1,179 324.3,178.3 324.4,177.5 324.6,176 324.7,175.4 324.8,176.7 325,176.4 325.1,176.8 325.3,177.1 325.4,177.2 325.6,180.1 325.7,178.4 325.9,177.9 326,178.8 326.2,179.1 326.3,182.9 326.4,181.4 326.6,180.9 326.7,178.2 326.9,180.3 327,178.7 327.2,180.9 327.3,178.1 327.5,176.7 327.6,178.3 327.8,180 327.9,178.5 328.1,176.5 328.2,179 328.3,178.7 328.5,178.3 328.6,178.9 328.8,176.8 328.9,181.1 329.1,178.5 329.2,178.1 329.4,178.1 329.5,180.1 329.7,178.4 329.8,177 329.9,177.6" fill="none" stroke="#ecec1c" stroke-width="1.0" stroke-linejoin="round"/>
<polyline points="463,359.5 463.4,346" fill="none" stroke="#ecec1c" stroke-width="1.0" stroke-linejoin="round"/>
<polyline points="579.3,155.8 579.4,157.2 579.6,157.9 579.7,161.9 579.9,166.1 580,170.8 580.2,176 580.3,181.9 580.5,187.6 580.6,192.8 580.8,195.4 580.9,197.3 581,198 581.2,197.3 581.3,196.5 581.5,193.5 581.6,190.3 581.8,184.9 581.9,181 582.1,176.2 582.2,172.5 582.4,171.2 582.5,165.9 582.7,167.8 582.8,167.1 582.9,165.6 583.1,166.8 583.2,168.9 583.4,171.5 583.5,171.3 583.7,175.1 583.8,177.5 584,182.2 584.1,185.3 584.3,186.7 584.4,189.2 584.5,189.2 584.7,187.4 584.8,186 585,185.1 585.1,186.7 585.3,182.3 585.4,179.3 585.6,178.3 585.7,173.8 585.9,174.2 586,172.1 586.2,171.9 586.3,171.7 586.4,167.8 586.6,171.2 586.7,173.7 586.9,174.5 587,173.6 587.2,177.9 587.3,180.2 587.5,182.3" fill="none" stroke="#ecec1c" stroke-width="1.0" stroke-linejoin="round"/>
<path d="M18.9 345.7v1.3M19.6 340.3v-1.5M21.5 340.8v-3.7M24 342.5v-1M25.3 346.6v1.9M25.9 342.2v-2.9M27.9 342.1v-4.5M28.5 340.9v-4.1M31 341.8v-1.5M31.7 345.5v2.2M32.9 341.6v-1.7M34.2 340.7v-3.2M34.9 341.9v-4.7M36.8 345.7v2.4M37.4 342.3v-2M52.7 179.5v3.5M53.9 175.3v-2.7M55.1 176.5v-3M55.7 180.2v2.5M56.9 176.6v-5.6M57.5 176.3v-2.9M58.7 182.7v3M59.9 175.5v-3.2M60.5 176.3v-1.2M61.8 181.8v2.1M63 183.6v1.3M63.6 176v-4.2M66 182.1v4.2M66.6 181.9v3M67.2 182.4v3.5M67.8 181.1v3M68.4 175.9v-1.7M69.6 181.8v4M73.8 177v-1.4M75 176v-2.6M76.2 183.3v2.6M77.5 177.2v-1.1M78.1 176.1v-1.4M79.9 176.1v-7.5M81.1 180.9v2.1M83.5 175.6v-3.1M86.5 182.9v2.8M87.1 175.1v-3.6M87.7 181v2.8M88.3 181.2v1.6M88.9 175.4v-1.5M91.3 182v1.7M92.6 175.9v-3.4M93.2 176.4v-2M94.4 181.7v3.4M95.6 176.8v-3.4M96.8 181.8v1.1M98 182v2.8M100.4 176.9v-2.7M101 174.3v-2M102.8 182.3v1.7M104.6 176v-2M105.2 180.3v5M105.8 181v3M106.4 174.8v-4.5M107.6 175.8v-4.4M108.3 180.3v1.3M108.9 174.1v-1.4M110.1 175.5v-2.3M111.3 175.4v-5.7M111.9 182.4v2.6M112.5 183.1v4M117.9 181.8v1.5M118.5 175.2v-4.2M121.5 174.5v-3M122.1 176.4v-1.4M123.3 182.7v1M124.6 181.9v2.5M125.2 176v-2.5M127 176.5v-1.1M129.4 175.3v-1.1M130 175.4v-2.5M131.8 182.8v2.4M133.6 176.1v-2.3M135.4 177.5v-4.6M139 183v2.3M140.3 182v2.1M141.5 176.5v-2.7M143.9 174.3v-1.8M145.1 175.2v-4.2M146.9 175v-2.4M147.5 176.1v-4.1M148.1 173.6v-1.9M148.7 180.6v4.7M150.5 182.5v2.8M151.1 180.8v4.2M152.3 182v1.5M155.4 174.6v-2.2M156 182.8v3.2M156.6 181.1v1.8M157.2 182v3M160.2 175.2v-3M160.8 181.3v2.2M161.4 175.5v-1.4M163.2 175.2v-1.4M166.8 181v2.7M167.4 181.6v3M168 181.6v1.7M169.2 176.5v-4.8M169.8 181.6v3.6M171.7 181.8v1.8M172.3 182.4v4.4M172.9 176.6v-3.7M174.1 181.6v4.6M174.7 176.7v-1.3M175.3 181.8v1.1M176.5 183.7v2.5M177.1 183.9v1.7M178.9 182.7v1.2M179.5 182.3v1.7M180.7 175.2v-2.8M181.3 182.4v1.7M182.5 182v6M183.7 182.9v2.5M184.3 182v3.6M184.9 181.3v4M186.8 182.3v2.5M188.6 182.2v1.7M189.2 181.6v3.4M192.2 177.3v-2.3M192.8 181.6v3M193.4 175v-3.2M194 182.4v1.5M195.2 348.6v3.7M196.4 343.6v-2.6M197.6 349.6v1.6M198.2 342.9v-2.2M198.8 350.1v3.1M199.4 343.9v-1.9M200 348.7v3.6M201.3 348.7v1.9M204.3 343.4v-1.1M204.9 347.8v2.6M205.5 343.2v-2.9M206.1 343v-7M206.7 343.5v-1.5M207.3 350.2v3.3M207.9 349v2.2M209.7 344.2v-2.6M210.3 350.2v1.5M210.9 348.9v2.3M211.5 348.6v2M212.1 349.4v5.9M213.4 343.8v-2.4M214 348.9v1.9M215.8 348.7v2.2M216.4 343.3v-4.2M218.2 343.4v-2.7M219.4 342.2v-2.2M220.6 348.8v2.3M222.4 349v2.3M223 349.3v2.3M224.8 349.1v3.7M227.3 344.3v-2.4M227.9 348.9v2.7M228.5 349.8v3.4M229.1 348.8v4.2M230.3 344.6v-1.3M231.5 344.6v-1.6M232.7 351.6v2.4M233.3 348.9v3.5M233.9 350.1v1.9M235.1 342.9v-1.4M237.6 343.3v-3.8M238.2 343.3v-4.4M238.8 341.7v-2.1M240 342.9v-1.6M241.8 343.2v-3M242.4 348.7v4.5M243 349.8v1.7M243.6 349.8v1.8M247.2 342.9v-3.1M248.4 343v-2.5M249.7 349.6v3.3M250.3 351v2.6M254.5 344.7v-1.3M255.1 344.1v-6.1M256.3 350.1v3.3M257.5 351.4v2.4M258.1 349.2v2.4M259.3 349.5v3.1M259.9 342.4v-2M261.2 348.6v2.2M262.4 342.4v-1.4M264.8 349.8v2.9M265.4 342.8v-3.5M266 343v-2.2M266.6 348.3v5.4M267.2 342.6v-2.3M267.8 347.9v1.7M269 341.8v-5.4M272 343.7v-2M272.7 342.4v-1.6M276.3 340.7v-1.7M279.3 349.6v2.9M279.9 349.2v6M282.3 343.7v-1.6M282.9 343.8v-1.3M283.5 349.3v2.1M286 349.6v2.4M287.8 343.6v-1.3M292 342.3v-3.8M296.9 349.4v1M297.5 340.8v-1.8M298.1 340.9v-2.4M299.3 343.7v-5.3M318.3 179.8v3M318.9 179.7v3.1M319.5 181.2v1.5M320.7 180.3v1.2M323.1 181.4v1.4M324.4 181.4v1.6M325 181.6v1.3M326.2 181v4.8M327.4 176.4v-1M328.6 175.4v-1M329.2 181.8v1.3M330.4 180.9v2M331.6 176.3v-3.7M332.8 175.6v-2.4M334 175.4v-2.4M335.8 175.3v-2.3M336.4 180.8v2.2M337 176.6v-1.2M338.3 177v-2.1M338.9 182.8v2.4M340.7 182.4v1.1M341.3 181.4v2.4M342.5 176.7v-1.7M343.7 175.7v-2.2M350.3 181.5v2.8M351.6 176.1v-2.6M352.2 182.3v2.6M354 176.3v-4.4M355.2 181.3v2M355.8 181.6v6.4M356.4 181.7v1.8M357.6 175.8v-3.1M358.8 177v-3.7M359.4 182.3v2.9M360.6 182.1v4.7M361.8 180.3v1.9M363 174.9v-1.5M363.6 175.5v-3.6M364.3 180.7v1.5M364.9 175.1v-3M366.7 176v-3M367.9 180.6v1.7M368.5 181.4v1.5M369.1 176.4v-3.4M369.7 174.2v-2M370.9 183.6v2.9M371.5 183.2v3.4M373.3 182.6v2.1M373.9 175.9v-3.2M377 176v-2.8M378.2 181.5v1.3M380.6 176.3v-2.7M382.4 175.2v-4.1M383 175.6v-1.3M384.2 174v-1.4M386.6 175.6v-2.4M387.2 175.5v-2.2M387.8 182.8v2.2M389.6 181.8v1.1M390.3 176.2v-2.1M390.9 174.5v-3.7M391.5 180.8v1.5M392.1 180.9v2.4M392.7 176.1v-1.3M393.9 181.4v3.2M394.5 182.8v3M395.1 181.9v3.2M395.7 181.1v1.7M396.3 176.9v-1.1M397.5 177v-1.9M398.1 183.5v2.6M398.7 181.7v1M399.3 183.1v3.1M399.9 176.7v-1.6M400.5 176.9v-2.6M401.1 176.7v-4.7M401.7 175.9v-3.4M403.6 182.9v4.8M404.2 182.9v3M404.8 175.8v-3.4M406.6 181.9v2.7M407.2 182v2.2M407.8 174.5v-1.1M409 181.4v1.5M409.6 180.9v2M410.2 181.1v4.3M412.6 180.8v1.5M414.4 175.1v-1.2M415.6 181.2v3.5M417.5 182.6v1M419.9 176v-1.5M420.5 182.3v2.2M421.1 175.9v-1.9M422.9 175.7v-2.2M423.5 181.4v2M424.7 181.1v2.5M426.5 182.1v2.7M427.1 181v2.6M428.9 174.9v-4M429.6 180.5v1.7M430.2 176v-1.2M432 181.6v3.1M432.6 182v3M435.6 181.7v3.2M436.8 181.9v1.2M437.4 175.4v-1.2M441 181.2v4.4M442.2 175.5v-1M442.9 176.1v-2.1M443.5 181.7v3.2M445.3 181.5v4.2M445.9 183.1v5M446.5 181.7v2.2M447.1 182.7v2M448.9 183.6v2.7M450.7 176.1v-2.2M452.5 176.9v-4.1M454.9 182.7v3M456.2 176.3v-3.5M456.8 180.8v1M458.6 174.2v-2.8M461 176.9v-3.8M462.2 177.3v-2.5M462.8 349.1v1.4M464 348.9v1.8M465.2 343.2v-1.5M467 344.5v-1.8M468.2 342.2v-1.4M471.3 344.3v-3.6M471.9 348.4v2.7M474.3 350v2.4M475.5 343.9v-1.7M476.1 349.9v1.5M476.7 343.1v-4.4M477.3 343.4v-1.7M477.9 343.7v-4.1M478.5 344.5v-3.2M481.5 343.4v-2.1M482.7 342v-1.2M483.9 342.4v-1.1M485.1 343v-2.5M485.7 343.2v-3.2M487 342.4v-3.5M487.6 343.7v-1.7M488.2 348v4.5M490 342.4v-3.4M491.2 348.4v1.3M491.8 349.5v1.6M492.4 349.5v3.5M493.6 350.6v1.2M496.6 343.5v-1.8M497.2 349.4v3.8M499.6 343.6v-4.1M500.2 348.8v2.7M500.8 343.7v-3.6M503.3 342.3v-4.5M505.1 348.8v5M506.3 347.7v4.1M510.5 342v-3.9M511.1 349.4v2.2M511.7 342.4v-2.3M512.3 348.1v1.9M512.9 342.5v-3M513.5 348.4v4.1M514.7 343.6v-1.9M515.3 343.1v-3M516.5 341.9v-6.4M517.2 343.6v-3.2M519 344.5v-2.5M523.2 348.8v2M526.2 344.4v-1.5M526.8 349.8v2.7M527.4 342.9v-3.9M529.2 349.7v1.3M530.4 349v1.3M532.9 348.9v2.4M534.1 348.5v3.7M534.7 348.7v1.2M535.9 348.9v1.2M537.7 343v-3.2M538.3 344.4v-7.5M538.9 349.3v3.9M540.1 344.3v-3.1M540.7 342.1v-2.6M541.3 342.2v-2.8M541.9 344.5v-1.5M543.1 348.8v2.3M543.7 348.7v1.3M544.3 344.5v-2M546.1 343.2v-6.6M546.7 348.7v1.8M548 349.6v3.6M549.2 343.3v-1.9M549.8 349v2.8M551 348.3v1.6M551.6 348.4v2.1M552.2 350.2v1.4M553.4 348.9v2.6M555.2 349.2v2.4M556.4 349.3v1.8M557.6 349.7v1.9M560 349.7v2.8M560.6 350v3.8M561.8 349.4v1.7M562.4 351v2.4M563.7 349.3v2.2M565.5 349.1v1.2M567.9 344v-1.5" stroke="#d2d01e" stroke-width="0.85" fill="none"/>
<path d="M18.3 340.6 L18.9 341.6 L19.6 339.8 L20.2 341.7 L20.8 341.4 L21.5 340.3 L22.1 341.6 L22.8 341.9 L23.4 342 L24 342 L24.7 342 L25.3 341.1 L25.9 341.7 L26.6 342 L27.2 340.7 L27.9 341.6 L28.5 340.4 L29.1 341.9 L29.8 340.5 L30.4 341.5 L31 341.3 L31.7 340.5 L32.3 340.6 L32.9 341.1 L33.6 340.3 L34.2 340.2 L34.9 341.4 L35.5 341.8 L36.1 340.8 L36.8 340.7 L37.4 341.8 L37.4 346.9 L36.8 346.2 L36.1 346.2 L35.5 346.8 L34.9 345.7 L34.2 345.5 L33.6 345.7 L32.9 345.4 L32.3 345.4 L31.7 346 L31 347.7 L30.4 345.5 L29.8 346.3 L29.1 345.6 L28.5 345.7 L27.9 346.2 L27.2 345.9 L26.6 346.3 L25.9 347.2 L25.3 347.1 L24.7 346.2 L24 346.2 L23.4 346.1 L22.8 346.5 L22.1 345.8 L21.5 346.4 L20.8 346.1 L20.2 347.1 L19.6 345.6 L18.9 346.2 L18.3 346.1ZM52.7 176.1 L53.3 176.3 L53.9 174.8 L54.5 176.6 L55.1 176 L55.7 175.8 L56.3 175.7 L56.9 176.1 L57.5 175.8 L58.1 176.4 L58.7 175 L59.3 173.9 L59.9 175 L60.5 175.8 L61.2 176.4 L61.8 176.1 L62.4 176 L63 176 L63.6 175.5 L64.2 174.3 L64.8 175.8 L65.4 176.1 L66 175.1 L66.6 176.4 L67.2 174.8 L67.8 175.7 L68.4 175.4 L69 175.4 L69.6 176.5 L70.2 175 L70.8 175.4 L71.4 175.6 L72 172.8 L72.6 176.1 L73.2 175 L73.8 176.5 L74.4 175.1 L75 175.5 L75.6 175.2 L76.2 176 L76.9 175.4 L77.5 176.7 L78.1 175.6 L78.7 176.5 L79.3 174.3 L79.9 175.6 L80.5 176 L81.1 175.2 L81.7 175.7 L82.3 175 L82.9 173.5 L83.5 175.1 L84.1 175.4 L84.7 174.9 L85.3 174.5 L85.9 175.1 L86.5 174.3 L87.1 174.6 L87.7 175.3 L88.3 174.8 L88.9 174.9 L89.5 175.6 L90.1 176.8 L90.7 175.4 L91.3 176.6 L91.9 176.3 L92.6 175.4 L93.2 175.9 L93.8 175.5 L94.4 176.2 L95 175.6 L95.6 176.3 L96.2 174.6 L96.8 175.6 L97.4 175.1 L98 175.9 L98.6 176.1 L99.2 174.6 L99.8 176.5 L100.4 176.4 L101 173.8 L101.6 176.4 L102.2 176.5 L102.8 175.5 L103.4 175.4 L104 175.3 L104.6 175.5 L105.2 175 L105.8 175.7 L106.4 174.3 L107 173.6 L107.6 175.3 L108.3 175.1 L108.9 173.6 L109.5 174.9 L110.1 175 L110.7 173.3 L111.3 174.9 L111.9 174.6 L112.5 173.9 L113.1 176 L113.7 175.2 L114.3 174.8 L114.9 175.8 L115.5 175.5 L116.1 176.2 L116.7 174.7 L117.3 176.1 L117.9 175.4 L118.5 174.7 L119.1 176.4 L119.7 175.2 L120.3 174.7 L120.9 176.4 L121.5 174 L122.1 175.9 L122.7 175.6 L123.3 175.8 L124 176.2 L124.6 175.6 L125.2 175.5 L125.8 176.1 L126.4 174.4 L127 176 L127.6 175 L128.2 176.2 L128.8 175.2 L129.4 174.8 L130 174.9 L130.6 176 L131.2 176.8 L131.8 176.4 L132.4 176.2 L133 176.5 L133.6 175.6 L134.2 176.6 L134.8 175.4 L135.4 177 L136 176.5 L136.6 175.3 L137.2 175.6 L137.8 176.7 L138.4 175.7 L139 175.8 L139.7 174.8 L140.3 175.8 L140.9 174.6 L141.5 176 L142.1 176.1 L142.7 175.5 L143.3 176.3 L143.9 173.8 L144.5 174.6 L145.1 174.7 L145.7 174.4 L146.3 175.2 L146.9 174.5 L147.5 175.6 L148.1 173.1 L148.7 175.1 L149.3 174.1 L149.9 175.6 L150.5 175.5 L151.1 175.5 L151.7 175 L152.3 175.2 L152.9 175.9 L153.5 174.8 L154.1 175.9 L154.7 175.7 L155.4 174.1 L156 175.8 L156.6 175.8 L157.2 174 L157.8 174 L158.4 174.2 L159 173.5 L159.6 175 L160.2 174.7 L160.8 175.1 L161.4 175 L162 173.4 L162.6 174.1 L163.2 174.7 L163.8 174.1 L164.4 174.9 L165 174.8 L165.6 174.6 L166.2 174.8 L166.8 175.6 L167.4 174.9 L168 175.1 L168.6 174.6 L169.2 176 L169.8 176 L170.4 176.1 L171.1 176.4 L171.7 175.9 L172.3 176.1 L172.9 176.1 L173.5 176.7 L174.1 174.7 L174.7 176.2 L175.3 176 L175.9 176.4 L176.5 177.1 L177.1 176.7 L177.7 175.2 L178.3 175.8 L178.9 175.2 L179.5 176.6 L180.1 176.3 L180.7 174.7 L181.3 175.4 L181.9 174.1 L182.5 176.1 L183.1 175.6 L183.7 175.3 L184.3 175 L184.9 176.2 L185.5 175.9 L186.1 176.6 L186.8 175.4 L187.4 176 L188 175.7 L188.6 176.9 L189.2 176.3 L189.8 176.2 L190.4 176.6 L191 174.9 L191.6 176.4 L192.2 176.8 L192.8 175.2 L193.4 174.5 L194 176.2 L194.6 175.2 L194.6 182.6 L194 182.9 L193.4 182.2 L192.8 182.1 L192.2 182.1 L191.6 181.7 L191 182.2 L190.4 182.9 L189.8 182 L189.2 182.1 L188.6 182.7 L188 183.5 L187.4 182.3 L186.8 182.8 L186.1 183 L185.5 181.8 L184.9 181.8 L184.3 182.5 L183.7 183.4 L183.1 182.2 L182.5 182.5 L181.9 184 L181.3 182.9 L180.7 181.9 L180.1 182.1 L179.5 182.8 L178.9 183.2 L178.3 183 L177.7 183.1 L177.1 184.4 L176.5 184.2 L175.9 183.1 L175.3 182.3 L174.7 183.5 L174.1 182.1 L173.5 182.8 L172.9 182.9 L172.3 182.9 L171.7 182.3 L171.1 183.5 L170.4 182.4 L169.8 182.1 L169.2 183.5 L168.6 181.4 L168 182.1 L167.4 182.1 L166.8 181.5 L166.2 181.3 L165.6 181.1 L165 180.5 L164.4 183.1 L163.8 181 L163.2 181.9 L162.6 181.3 L162 180.3 L161.4 180.9 L160.8 181.8 L160.2 182.3 L159.6 181.1 L159 180.5 L158.4 180.7 L157.8 182.1 L157.2 182.5 L156.6 181.6 L156 183.3 L155.4 181.7 L154.7 181.5 L154.1 181.3 L153.5 181.6 L152.9 181.5 L152.3 182.5 L151.7 181.1 L151.1 181.3 L150.5 183 L149.9 181.6 L149.3 181.6 L148.7 181.1 L148.1 181.6 L147.5 181.4 L146.9 181.5 L146.3 181.7 L145.7 182.1 L145.1 181.4 L144.5 181.3 L143.9 183.5 L143.3 182.1 L142.7 182 L142.1 181.6 L141.5 182 L140.9 182.1 L140.3 182.5 L139.7 182.5 L139 183.5 L138.4 183.9 L137.8 182 L137.2 182.3 L136.6 183 L136 183.5 L135.4 184.3 L134.8 182.6 L134.2 182.6 L133.6 182.1 L133 183.8 L132.4 182.5 L131.8 183.3 L131.2 183.3 L130.6 183 L130 183 L129.4 181.8 L128.8 181.7 L128.2 183.1 L127.6 181.5 L127 182 L126.4 181.6 L125.8 181.6 L125.2 181.6 L124.6 182.4 L124 183.2 L123.3 183.2 L122.7 181.8 L122.1 181.6 L121.5 182.4 L120.9 182.3 L120.3 181.7 L119.7 183.3 L119.1 181.6 L118.5 182.4 L117.9 182.3 L117.3 183.5 L116.7 183.6 L116.1 182.2 L115.5 181.5 L114.9 180.9 L114.3 181.1 L113.7 181.9 L113.1 181.4 L112.5 183.6 L111.9 182.9 L111.3 182.2 L110.7 182.1 L110.1 182.2 L109.5 181.5 L108.9 181.9 L108.3 180.8 L107.6 181.9 L107 181.8 L106.4 182.8 L105.8 181.5 L105.2 180.8 L104.6 181.5 L104 183.3 L103.4 181.9 L102.8 182.8 L102.2 183.4 L101.6 182.5 L101 182.7 L100.4 182 L99.8 182.3 L99.2 183 L98.6 181.5 L98 182.5 L97.4 183.6 L96.8 182.3 L96.2 181.9 L95.6 182.4 L95 183.3 L94.4 182.2 L93.8 183 L93.2 182.1 L92.6 182.9 L91.9 182.3 L91.3 182.5 L90.7 183.1 L90.1 182.3 L89.5 182.3 L88.9 181.9 L88.3 181.7 L87.7 181.5 L87.1 181.4 L86.5 183.4 L85.9 180.4 L85.3 180.5 L84.7 181 L84.1 180.7 L83.5 181.7 L82.9 182.7 L82.3 180.9 L81.7 181.3 L81.1 181.4 L80.5 182.4 L79.9 184.2 L79.3 182.9 L78.7 182.1 L78.1 182.6 L77.5 182.4 L76.9 181.8 L76.2 183.8 L75.6 182.2 L75 182.8 L74.4 182.1 L73.8 182.5 L73.2 183.8 L72.6 182.5 L72 183.4 L71.4 181.1 L70.8 184.7 L70.2 181.8 L69.6 182.3 L69 182.1 L68.4 182.1 L67.8 181.6 L67.2 182.9 L66.6 182.4 L66 182.6 L65.4 182.1 L64.8 181.8 L64.2 183.3 L63.6 183.4 L63 184.1 L62.4 182.7 L61.8 182.3 L61.2 181.8 L60.5 183.6 L59.9 181.2 L59.3 181.4 L58.7 183.2 L58.1 182.3 L57.5 183.3 L56.9 182.2 L56.3 180.6 L55.7 180.7 L55.1 181.3 L54.5 180.2 L53.9 179.9 L53.3 179.5 L52.7 180ZM195.2 342.5 L195.8 342 L196.4 343.1 L197 342.1 L197.6 342.3 L198.2 342.4 L198.8 342.7 L199.4 343.4 L200 342.7 L200.6 342.8 L201.3 342.6 L201.9 342.8 L202.5 342.8 L203.1 343.2 L203.7 343.1 L204.3 342.9 L204.9 342.6 L205.5 342.7 L206.1 342.5 L206.7 343 L207.3 342.8 L207.9 343.1 L208.5 342.3 L209.1 342.5 L209.7 343.7 L210.3 343.4 L210.9 341 L211.5 343.7 L212.1 344 L212.7 342.3 L213.4 343.3 L214 344.2 L214.6 343.6 L215.2 342.8 L215.8 343.8 L216.4 342.8 L217 342.1 L217.6 342.8 L218.2 342.9 L218.8 343.2 L219.4 341.7 L220 342.4 L220.6 343.7 L221.2 343.3 L221.8 342.7 L222.4 343.4 L223 343.7 L223.6 343.8 L224.2 343.8 L224.8 341.3 L225.5 342.8 L226.1 342.6 L226.7 342.4 L227.3 343.8 L227.9 343.5 L228.5 343.9 L229.1 343.4 L229.7 341.8 L230.3 344.1 L230.9 344.1 L231.5 344.1 L232.1 343.6 L232.7 344 L233.3 340.5 L233.9 343.1 L234.5 341.5 L235.1 342.4 L235.7 342 L236.3 343 L237 342.6 L237.6 342.8 L238.2 342.8 L238.8 341.2 L239.4 343.1 L240 342.4 L240.6 341 L241.2 342.8 L241.8 342.7 L242.4 342.3 L243 342.8 L243.6 343.4 L244.2 343.6 L244.8 343.2 L245.4 342.6 L246 344.2 L246.6 344.3 L247.2 342.4 L247.8 342 L248.4 342.5 L249.1 344.2 L249.7 343.4 L250.3 344.6 L250.9 344.2 L251.5 343.8 L252.1 344.6 L252.7 344 L253.3 344.3 L253.9 344.6 L254.5 344.2 L255.1 343.6 L255.7 344.1 L256.3 343.6 L256.9 342.5 L257.5 343.3 L258.1 343.4 L258.7 343.1 L259.3 342.8 L259.9 341.9 L260.5 343.8 L261.2 342.8 L261.8 343.2 L262.4 341.9 L263 343.2 L263.6 342.7 L264.2 341.7 L264.8 342.3 L265.4 342.3 L266 342.5 L266.6 342.1 L267.2 342.1 L267.8 342.9 L268.4 341.6 L269 341.3 L269.6 343 L270.2 341.9 L270.8 341 L271.4 342.9 L272 343.2 L272.7 341.9 L273.3 342.3 L273.9 342.1 L274.5 341.6 L275.1 343.9 L275.7 343.7 L276.3 340.2 L276.9 342.4 L277.5 343.3 L278.1 343.3 L278.7 342.2 L279.3 343.8 L279.9 342.9 L280.5 342.9 L281.1 342.6 L281.7 342.9 L282.3 343.2 L282.9 343.3 L283.5 342.2 L284.1 343.5 L284.8 342.8 L285.4 342 L286 341.7 L286.6 343.7 L287.2 341.5 L287.8 343.1 L288.4 342.8 L289 343.1 L289.6 342.8 L290.2 342.5 L290.8 341.9 L291.4 342.1 L292 341.8 L292.6 342.8 L293.2 342.9 L293.8 342.3 L294.4 343 L295 342.4 L295.6 342.2 L296.2 343 L296.9 342.2 L297.5 340.3 L298.1 340.4 L298.7 342.8 L299.3 343.2 L299.9 342.2 L300.5 343.8 L301.1 342.7 L301.7 343.6 L302.3 342.5 L302.3 349.4 L301.7 350.9 L301.1 349.7 L300.5 350.1 L299.9 350 L299.3 348.7 L298.7 350 L298.1 349.8 L297.5 349.2 L296.9 349.9 L296.2 348.9 L295.6 348.2 L295 349.1 L294.4 348.6 L293.8 350.6 L293.2 351.4 L292.6 349.5 L292 349.2 L291.4 348.8 L290.8 348.7 L290.2 350.1 L289.6 349 L289 350.2 L288.4 348.9 L287.8 348.4 L287.2 349.6 L286.6 349.9 L286 350.1 L285.4 349 L284.8 349.5 L284.1 349.3 L283.5 349.8 L282.9 348.9 L282.3 349.4 L281.7 349.9 L281.1 350.1 L280.5 351.2 L279.9 349.7 L279.3 350.1 L278.7 350.1 L278.1 350.8 L277.5 350 L276.9 349.2 L276.3 349.5 L275.7 349.9 L275.1 350.5 L274.5 350.1 L273.9 348.8 L273.3 349.9 L272.7 350.6 L272 348.6 L271.4 348.9 L270.8 348.3 L270.2 348.3 L269.6 348.3 L269 348.9 L268.4 348.4 L267.8 348.4 L267.2 349.8 L266.6 348.8 L266 348.5 L265.4 349.7 L264.8 350.3 L264.2 350 L263.6 349.4 L263 350.8 L262.4 349.4 L261.8 349.2 L261.2 349.1 L260.5 349.8 L259.9 350.7 L259.3 350 L258.7 349.3 L258.1 349.7 L257.5 351.9 L256.9 350.4 L256.3 350.6 L255.7 350.3 L255.1 349.7 L254.5 351.7 L253.9 349.6 L253.3 350.5 L252.7 350.4 L252.1 352 L251.5 351 L250.9 352.2 L250.3 351.5 L249.7 350.1 L249.1 350.4 L248.4 350 L247.8 350.5 L247.2 349.4 L246.6 349.6 L246 352.6 L245.4 349.4 L244.8 350.5 L244.2 350.3 L243.6 350.3 L243 350.3 L242.4 349.2 L241.8 348.6 L241.2 349.1 L240.6 348.7 L240 349 L239.4 348.8 L238.8 348.7 L238.2 349.8 L237.6 348.4 L237 350.3 L236.3 349.6 L235.7 349.5 L235.1 351 L234.5 348.9 L233.9 350.6 L233.3 349.4 L232.7 352.1 L232.1 350.2 L231.5 350 L230.9 350.1 L230.3 349.5 L229.7 349.3 L229.1 349.3 L228.5 350.3 L227.9 349.4 L227.3 350.5 L226.7 349.4 L226.1 349.7 L225.5 350.3 L224.8 349.6 L224.2 349.9 L223.6 349.4 L223 349.8 L222.4 349.5 L221.8 350.1 L221.2 351.8 L220.6 349.3 L220 350 L219.4 349.1 L218.8 349.9 L218.2 349.2 L217.6 350 L217 350.2 L216.4 349.5 L215.8 349.2 L215.2 350.1 L214.6 350.5 L214 349.4 L213.4 350.1 L212.7 349.2 L212.1 349.9 L211.5 349.1 L210.9 349.4 L210.3 350.7 L209.7 352.2 L209.1 348.6 L208.5 349 L207.9 349.5 L207.3 350.7 L206.7 350.9 L206.1 348 L205.5 348.3 L204.9 348.3 L204.3 348.6 L203.7 348.4 L203.1 348.8 L202.5 349.6 L201.9 348.7 L201.3 349.2 L200.6 349.6 L200 349.2 L199.4 350.2 L198.8 350.6 L198.2 350.8 L197.6 350.1 L197 350.8 L196.4 349.5 L195.8 349.6 L195.2 349.1ZM317.7 176.2 L318.3 175.5 L318.9 175.3 L319.5 176.7 L320.1 176.1 L320.7 176.6 L321.3 176.4 L321.9 175.9 L322.5 174.6 L323.1 175.4 L323.7 176.2 L324.4 175.8 L325 175.6 L325.6 176.2 L326.2 174 L326.8 174.5 L327.4 175.9 L328 176.1 L328.6 174.9 L329.2 174.6 L329.8 175.7 L330.4 175.8 L331 173.9 L331.6 175.8 L332.2 175.1 L332.8 175.1 L333.4 175.5 L334 174.9 L334.6 174.9 L335.2 175.4 L335.8 174.8 L336.4 175.6 L337 176.1 L337.7 176.2 L338.3 176.5 L338.9 174.5 L339.5 175.9 L340.1 175.5 L340.7 176.6 L341.3 176.4 L341.9 176.5 L342.5 176.2 L343.1 176.9 L343.7 175.2 L344.3 176 L344.9 176.8 L345.5 176.7 L346.1 175.9 L346.7 176.9 L347.3 175.7 L347.9 175.6 L348.5 176.7 L349.1 176.3 L349.7 176.7 L350.3 176.3 L351 176.9 L351.6 175.6 L352.2 177 L352.8 176.5 L353.4 175.9 L354 175.8 L354.6 176.5 L355.2 176.2 L355.8 176 L356.4 175.8 L357 176.3 L357.6 175.3 L358.2 175.6 L358.8 176.5 L359.4 175.2 L360 175.1 L360.6 175.2 L361.2 175.5 L361.8 174 L362.4 174.2 L363 174.4 L363.6 175 L364.3 175 L364.9 174.6 L365.5 175.2 L366.1 175.5 L366.7 175.5 L367.3 174.2 L367.9 176 L368.5 175.8 L369.1 175.9 L369.7 173.7 L370.3 175.8 L370.9 175.3 L371.5 176.4 L372.1 176.5 L372.7 175.1 L373.3 175 L373.9 175.4 L374.5 174.8 L375.1 176.4 L375.7 175 L376.3 175.7 L377 175.5 L377.6 175.9 L378.2 175.1 L378.8 175.4 L379.4 176.3 L380 175.4 L380.6 175.8 L381.2 176.6 L381.8 176.1 L382.4 174.7 L383 175.1 L383.6 175.7 L384.2 173.5 L384.8 176.5 L385.4 175.9 L386 175.8 L386.6 175.1 L387.2 175 L387.8 175.6 L388.4 174.3 L389 174.9 L389.6 174.9 L390.3 175.7 L390.9 174 L391.5 172.6 L392.1 175.9 L392.7 175.6 L393.3 176.2 L393.9 175.1 L394.5 176.2 L395.1 174.4 L395.7 176.3 L396.3 176.4 L396.9 175.6 L397.5 176.5 L398.1 175.4 L398.7 176.6 L399.3 176 L399.9 176.2 L400.5 176.4 L401.1 176.2 L401.7 175.4 L402.3 176.8 L402.9 177.1 L403.6 176.9 L404.2 176.7 L404.8 175.3 L405.4 174.8 L406 175.3 L406.6 175.6 L407.2 174.6 L407.8 174 L408.4 174.7 L409 174 L409.6 175.9 L410.2 175.8 L410.8 175.7 L411.4 175.4 L412 174.3 L412.6 175.4 L413.2 175.5 L413.8 175.7 L414.4 174.6 L415 175.1 L415.6 175.6 L416.3 173.8 L416.9 172 L417.5 175.9 L418.1 175.9 L418.7 174.2 L419.3 175.8 L419.9 175.5 L420.5 175 L421.1 175.4 L421.7 175.7 L422.3 174.5 L422.9 175.2 L423.5 174.3 L424.1 174.8 L424.7 175 L425.3 175.9 L425.9 175.3 L426.5 175.5 L427.1 175.8 L427.7 175.3 L428.3 173.2 L428.9 174.4 L429.6 173.1 L430.2 175.5 L430.8 173.2 L431.4 175.4 L432 174.9 L432.6 175.3 L433.2 175.1 L433.8 175.6 L434.4 175.8 L435 175.4 L435.6 175.5 L436.2 175.4 L436.8 175.7 L437.4 174.9 L438 175.1 L438.6 176.2 L439.2 174.8 L439.8 174.7 L440.4 175.4 L441 174.9 L441.6 175.6 L442.2 175 L442.9 175.6 L443.5 176.1 L444.1 174.8 L444.7 175.6 L445.3 175.7 L445.9 174.4 L446.5 175.1 L447.1 176.6 L447.7 176.1 L448.3 176.5 L448.9 176.4 L449.5 175.5 L450.1 176 L450.7 175.6 L451.3 175.6 L451.9 176.8 L452.5 176.4 L453.1 175.7 L453.7 175.2 L454.3 175.2 L454.9 176.1 L455.5 175.6 L456.2 175.8 L456.8 175.5 L457.4 176.1 L458 174.7 L458.6 173.7 L459.2 174.3 L459.8 176 L460.4 174.9 L461 176.4 L461.6 175.1 L462.2 176.8 L462.2 182.6 L461.6 182.2 L461 183.3 L460.4 183.3 L459.8 181.3 L459.2 183.4 L458.6 183 L458 182.2 L457.4 181.8 L456.8 181.3 L456.2 183 L455.5 181.5 L454.9 183.2 L454.3 181.7 L453.7 183.2 L453.1 182 L452.5 181.8 L451.9 183.1 L451.3 182.7 L450.7 182.9 L450.1 183 L449.5 182 L448.9 184.1 L448.3 182.9 L447.7 181.8 L447.1 183.2 L446.5 182.2 L445.9 183.6 L445.3 182 L444.7 182 L444.1 183.1 L443.5 182.2 L442.9 182.2 L442.2 181.8 L441.6 181.9 L441 181.7 L440.4 183.2 L439.8 181.8 L439.2 182.8 L438.6 182.6 L438 183 L437.4 183.3 L436.8 182.4 L436.2 182.6 L435.6 182.2 L435 182.8 L434.4 183.6 L433.8 181.2 L433.2 181.2 L432.6 182.5 L432 182.1 L431.4 181 L430.8 181.2 L430.2 181.8 L429.6 181 L428.9 182.2 L428.3 181.9 L427.7 181.1 L427.1 181.5 L426.5 182.6 L425.9 181.3 L425.3 181.8 L424.7 181.6 L424.1 182 L423.5 181.9 L422.9 183.7 L422.3 181.4 L421.7 181.5 L421.1 181.5 L420.5 182.8 L419.9 181.3 L419.3 182.8 L418.7 182.8 L418.1 182.1 L417.5 183.1 L416.9 180.9 L416.3 181.3 L415.6 181.7 L415 181 L414.4 181.9 L413.8 182 L413.2 182.2 L412.6 181.3 L412 182.9 L411.4 182.5 L410.8 182.2 L410.2 181.6 L409.6 181.4 L409 181.9 L408.4 182.3 L407.8 182.1 L407.2 182.5 L406.6 182.4 L406 182.9 L405.4 184.6 L404.8 183.6 L404.2 183.4 L403.6 183.4 L402.9 182.7 L402.3 183.1 L401.7 183.3 L401.1 183.1 L400.5 182.7 L399.9 182.7 L399.3 183.6 L398.7 182.2 L398.1 184 L397.5 183.3 L396.9 182.2 L396.3 181.7 L395.7 181.6 L395.1 182.4 L394.5 183.3 L393.9 181.9 L393.3 183.5 L392.7 181.5 L392.1 181.4 L391.5 181.3 L390.9 181.5 L390.3 181.1 L389.6 182.3 L389 182 L388.4 183.4 L387.8 183.3 L387.2 181.4 L386.6 181.8 L386 183.2 L385.4 181.8 L384.8 182.1 L384.2 184.5 L383.6 183.7 L383 184.5 L382.4 182.1 L381.8 182.1 L381.2 182.8 L380.6 183.9 L380 182.9 L379.4 181.4 L378.8 182.7 L378.2 182 L377.6 182.4 L377 181.8 L376.3 181.4 L375.7 181.8 L375.1 183.7 L374.5 182.1 L373.9 181.9 L373.3 183.1 L372.7 181.6 L372.1 181.7 L371.5 183.7 L370.9 184.1 L370.3 183.2 L369.7 181.9 L369.1 182.1 L368.5 181.9 L367.9 181.1 L367.3 182 L366.7 181.5 L366.1 181.6 L365.5 182.2 L364.9 181.5 L364.3 181.2 L363.6 181.1 L363 181 L362.4 182.1 L361.8 180.8 L361.2 181.1 L360.6 182.6 L360 181.5 L359.4 182.8 L358.8 181.5 L358.2 183.6 L357.6 183.9 L357 182.1 L356.4 182.2 L355.8 182.1 L355.2 181.8 L354.6 182.4 L354 182.8 L353.4 182.4 L352.8 184.4 L352.2 182.8 L351.6 182.9 L351 182.6 L350.3 182 L349.7 183.6 L349.1 182 L348.5 183.5 L347.9 182.8 L347.3 183.4 L346.7 184.4 L346.1 182.6 L345.5 183.6 L344.9 183.1 L344.3 182.8 L343.7 182.7 L343.1 182.3 L342.5 182.8 L341.9 182.8 L341.3 181.9 L340.7 182.9 L340.1 183.7 L339.5 181.6 L338.9 183.3 L338.3 182.2 L337.7 181.5 L337 184 L336.4 181.3 L335.8 182 L335.2 182.3 L334.6 181.3 L334 181.5 L333.4 181.5 L332.8 181.8 L332.2 181.1 L331.6 181.9 L331 182.2 L330.4 181.4 L329.8 181.3 L329.2 182.3 L328.6 181.7 L328 181.4 L327.4 181.7 L326.8 184.6 L326.2 181.5 L325.6 182.6 L325 182.1 L324.4 181.9 L323.7 181.9 L323.1 181.9 L322.5 181 L321.9 181.6 L321.3 181.2 L320.7 180.8 L320.1 181.3 L319.5 181.7 L318.9 180.2 L318.3 180.3 L317.7 179.2ZM462.8 343.4 L463.4 343.4 L464 343.1 L464.6 343.2 L465.2 342.7 L465.8 343.2 L466.4 342.4 L467 344 L467.6 342.9 L468.2 341.7 L468.8 342.2 L469.4 343.5 L470 342.6 L470.7 342.8 L471.3 343.8 L471.9 343.1 L472.5 343.9 L473.1 343.2 L473.7 340.9 L474.3 343.5 L474.9 343.4 L475.5 343.4 L476.1 344 L476.7 342.6 L477.3 342.9 L477.9 343.2 L478.5 344 L479.1 343.4 L479.7 343.6 L480.3 342.9 L480.9 343.5 L481.5 342.9 L482.1 343.2 L482.7 341.5 L483.3 341.6 L483.9 341.9 L484.5 342.4 L485.1 342.5 L485.7 342.7 L486.4 342.9 L487 341.9 L487.6 343.2 L488.2 343 L488.8 342.2 L489.4 342.4 L490 341.9 L490.6 342.2 L491.2 340.8 L491.8 343.4 L492.4 343.4 L493 343.6 L493.6 342.5 L494.2 343.6 L494.8 343.6 L495.4 343 L496 343.7 L496.6 343 L497.2 343.6 L497.8 341.2 L498.4 342.5 L499 342.8 L499.6 343.1 L500.2 343 L500.8 343.2 L501.5 341.7 L502.1 343.2 L502.7 342.1 L503.3 341.8 L503.9 342.3 L504.5 342.6 L505.1 343.1 L505.7 342 L506.3 341 L506.9 343.2 L507.5 343.3 L508.1 343 L508.7 342.7 L509.3 342.7 L509.9 340.5 L510.5 341.5 L511.1 341.7 L511.7 341.9 L512.3 342.8 L512.9 342 L513.5 342.6 L514.1 342.2 L514.7 343.1 L515.3 342.6 L515.9 342.7 L516.5 341.4 L517.2 343.1 L517.8 343.5 L518.4 342.2 L519 344 L519.6 343.2 L520.2 343.8 L520.8 342.9 L521.4 343.5 L522 343.9 L522.6 342 L523.2 342.6 L523.8 341.6 L524.4 342.2 L525 343.5 L525.6 343.7 L526.2 343.9 L526.8 343.8 L527.4 342.4 L528 342.7 L528.6 341.1 L529.2 344 L529.8 343.5 L530.4 343.8 L531 343.3 L531.6 343.5 L532.2 343.7 L532.9 343.2 L533.5 343.6 L534.1 343.6 L534.7 343.2 L535.3 343.4 L535.9 342 L536.5 342.8 L537.1 344 L537.7 342.5 L538.3 343.9 L538.9 343 L539.5 341.8 L540.1 343.8 L540.7 341.6 L541.3 341.7 L541.9 344 L542.5 344.1 L543.1 343.9 L543.7 344 L544.3 344 L544.9 342.4 L545.5 342.6 L546.1 342.7 L546.7 342.9 L547.3 342.3 L548 342.1 L548.6 343.5 L549.2 342.8 L549.8 343.4 L550.4 343.1 L551 343.4 L551.6 342.3 L552.2 343.8 L552.8 342.9 L553.4 343.7 L554 343.9 L554.6 343.5 L555.2 343.2 L555.8 344 L556.4 344.6 L557 342.3 L557.6 343.6 L558.2 341.9 L558.8 343.9 L559.4 341.8 L560 342.4 L560.6 343.2 L561.2 343.7 L561.8 344.6 L562.4 344.3 L563 344.2 L563.7 343.5 L564.3 343 L564.9 344.3 L565.5 343.9 L566.1 342.5 L566.7 343.7 L567.3 342.5 L567.9 343.5 L568.5 343.4 L569.1 343.6 L569.7 341.6 L570.3 342.3 L570.9 342.9 L570.9 351.2 L570.3 349.9 L569.7 349.8 L569.1 349.3 L568.5 349.5 L567.9 349.7 L567.3 349.9 L566.7 350.5 L566.1 349.8 L565.5 349.6 L564.9 349.6 L564.3 352.4 L563.7 349.8 L563 349.4 L562.4 351.5 L561.8 349.9 L561.2 351.1 L560.6 350.5 L560 350.2 L559.4 350.1 L558.8 349.9 L558.2 349.7 L557.6 350.2 L557 350.7 L556.4 349.8 L555.8 350.3 L555.2 349.7 L554.6 350.7 L554 349.4 L553.4 349.4 L552.8 351.1 L552.2 350.7 L551.6 348.9 L551 348.8 L550.4 349.5 L549.8 349.5 L549.2 350.3 L548.6 348.9 L548 350.1 L547.3 350.7 L546.7 349.2 L546.1 349.5 L545.5 351.1 L544.9 349.6 L544.3 349.7 L543.7 349.2 L543.1 349.3 L542.5 350.3 L541.9 349.6 L541.3 349.9 L540.7 349.4 L540.1 349.3 L539.5 350.6 L538.9 349.8 L538.3 349 L537.7 349.1 L537.1 349.4 L536.5 349.5 L535.9 349.4 L535.3 350.5 L534.7 349.2 L534.1 349 L533.5 350.6 L532.9 349.4 L532.2 349.5 L531.6 351 L531 350.7 L530.4 349.5 L529.8 349.8 L529.2 350.2 L528.6 349 L528 348.9 L527.4 349 L526.8 350.3 L526.2 350.6 L525.6 349.9 L525 350 L524.4 349.7 L523.8 349.4 L523.2 349.3 L522.6 349.3 L522 349.9 L521.4 351.7 L520.8 349.9 L520.2 350.1 L519.6 349.3 L519 349.7 L518.4 350 L517.8 349.2 L517.2 349.2 L516.5 349.3 L515.9 350 L515.3 348.8 L514.7 349.7 L514.1 349 L513.5 348.9 L512.9 350.1 L512.3 348.6 L511.7 348 L511.1 349.9 L510.5 348 L509.9 349.5 L509.3 348.3 L508.7 349.5 L508.1 348.5 L507.5 348.5 L506.9 348.2 L506.3 348.2 L505.7 348.3 L505.1 349.3 L504.5 349.7 L503.9 349.2 L503.3 349.7 L502.7 348.3 L502.1 349 L501.5 349.7 L500.8 349.3 L500.2 349.3 L499.6 348.7 L499 348.8 L498.4 350.8 L497.8 349 L497.2 349.9 L496.6 349.6 L496 350.3 L495.4 350.4 L494.8 349.4 L494.2 349 L493.6 351.1 L493 349.5 L492.4 350 L491.8 350 L491.2 348.9 L490.6 349 L490 350.2 L489.4 348.4 L488.8 348.7 L488.2 348.5 L487.6 352.2 L487 349.4 L486.4 351.3 L485.7 349.4 L485.1 349.1 L484.5 351.1 L483.9 351.5 L483.3 349.6 L482.7 348.7 L482.1 349 L481.5 350.8 L480.9 348.8 L480.3 349.2 L479.7 349.5 L479.1 350.2 L478.5 350.6 L477.9 350.2 L477.3 350.4 L476.7 350 L476.1 350.4 L475.5 349.8 L474.9 350.5 L474.3 350.5 L473.7 349.6 L473.1 350.5 L472.5 350.7 L471.9 348.9 L471.3 349 L470.7 350.3 L470 350.2 L469.4 350 L468.8 349.7 L468.2 350.2 L467.6 349.4 L467 349.6 L466.4 350.1 L465.8 350.2 L465.2 350.2 L464.6 350.3 L464 349.4 L463.4 350.9 L462.8 349.6Z" fill="#ecec1c"/>
<path d="M581.8 307.5l4.2-3.2v2.5h2.2v1.4h-2.2v2.5z" fill="#ecec1c"/>
<path d="M6 347.9h6.6l3.8 4.6l-3.8 4.6h-6.6z" fill="#ecec1c"/>
<text x="10" y="355.6" text-anchor="middle" font-family="'Liberation Sans','DejaVu Sans',sans-serif" font-size="8.6" fill="#111" stroke="#111" stroke-width="0.3">1</text>
<text x="19.4" y="354.9" font-family="'DejaVu Sans','Liberation Sans',sans-serif" font-size="7.9" fill="#f4f4f4" stroke="#f4f4f4" stroke-width="0.3" textLength="15.6" lengthAdjust="spacingAndGlyphs">Vds</text>
<rect x="17.6" y="391.4" width="316.1" height="11.7" rx="3.2" fill="#030303" stroke="#98a2e2" stroke-width="0.9"/>
<rect x="17.6" y="403.7" width="316.1" height="21.6" rx="3.2" fill="#030303" stroke="#98a2e2" stroke-width="0.9"/>
<rect x="338.6" y="391.8" width="83.5" height="20.8" rx="3.2" fill="#030303" stroke="#98a2e2" stroke-width="0.9"/>
<rect x="427" y="391.8" width="60" height="20.8" rx="3.2" fill="#030303" stroke="#98a2e2" stroke-width="0.9"/>
<rect x="491.6" y="391.8" width="96.9" height="20.8" rx="3.2" fill="#030303" stroke="#98a2e2" stroke-width="0.9"/>
<rect x="525.3" y="424.6" width="63.2" height="21.2" rx="3.2" fill="#030303" stroke="#98a2e2" stroke-width="0.9"/>
<rect x="21" y="392.9" width="14.4" height="9.2" rx="4.6" fill="#ecec1c"/>
<text x="28" y="400.7" text-anchor="middle" font-family="'Liberation Sans','DejaVu Sans',sans-serif" font-size="9.2" fill="#111" stroke="#111" stroke-width="0.3">1</text>
<text x="45" y="400.3" font-family="'DejaVu Sans','Liberation Sans',sans-serif" font-weight="normal" font-size="8.3" fill="#eef02a" stroke="#eef02a" stroke-width="0.32" textLength="28.4" lengthAdjust="spacing" xml:space="preserve">20.0 V</text>
<text x="96" y="412.4" font-family="'DejaVu Sans','Liberation Sans',sans-serif" font-weight="normal" font-size="8.3" fill="#f2f2f2" stroke="#f2f2f2" stroke-width="0.32" textLength="24.2" lengthAdjust="spacing" xml:space="preserve">Value</text>
<text x="146.6" y="412.4" font-family="'DejaVu Sans','Liberation Sans',sans-serif" font-weight="normal" font-size="8.3" fill="#f2f2f2" stroke="#f2f2f2" stroke-width="0.32" textLength="23.8" lengthAdjust="spacing" xml:space="preserve">Mean</text>
<text x="193.9" y="412.4" font-family="'DejaVu Sans','Liberation Sans',sans-serif" font-weight="normal" font-size="8.3" fill="#f2f2f2" stroke="#f2f2f2" stroke-width="0.32" textLength="16.8" lengthAdjust="spacing" xml:space="preserve">Min</text>
<text x="240.8" y="412.4" font-family="'DejaVu Sans','Liberation Sans',sans-serif" font-weight="normal" font-size="8.3" fill="#f2f2f2" stroke="#f2f2f2" stroke-width="0.32" textLength="16.9" lengthAdjust="spacing" xml:space="preserve">Max</text>
<text x="286.6" y="412.4" font-family="'DejaVu Sans','Liberation Sans',sans-serif" font-weight="normal" font-size="8.3" fill="#f2f2f2" stroke="#f2f2f2" stroke-width="0.32" textLength="35.3" lengthAdjust="spacing" xml:space="preserve">Std Dev</text>
<rect x="21" y="415.4" width="14.4" height="9.2" rx="4.6" fill="#ecec1c"/>
<text x="28" y="423.2" text-anchor="middle" font-family="'Liberation Sans','DejaVu Sans',sans-serif" font-size="9.2" fill="#111" stroke="#111" stroke-width="0.3">1</text>
<text x="37.8" y="422.9" font-family="'DejaVu Sans','Liberation Sans',sans-serif" font-weight="normal" font-size="8.3" fill="#eef02a" stroke="#eef02a" stroke-width="0.32" textLength="17.2" lengthAdjust="spacing" xml:space="preserve">Max</text>
<text x="97" y="422.9" font-family="'DejaVu Sans','Liberation Sans',sans-serif" font-weight="normal" font-size="8.3" fill="#eef02a" stroke="#eef02a" stroke-width="0.32" textLength="24" lengthAdjust="spacing" xml:space="preserve">142 V</text>
<text x="147" y="422.9" font-family="'DejaVu Sans','Liberation Sans',sans-serif" font-weight="normal" font-size="8.3" fill="#eef02a" stroke="#eef02a" stroke-width="0.32" textLength="15.6" lengthAdjust="spacing" xml:space="preserve">142</text>
<text x="194" y="422.9" font-family="'DejaVu Sans','Liberation Sans',sans-serif" font-weight="normal" font-size="8.3" fill="#eef02a" stroke="#eef02a" stroke-width="0.32" textLength="15.4" lengthAdjust="spacing" xml:space="preserve">142</text>
<text x="240.8" y="422.9" font-family="'DejaVu Sans','Liberation Sans',sans-serif" font-weight="normal" font-size="8.3" fill="#eef02a" stroke="#eef02a" stroke-width="0.32" textLength="15.6" lengthAdjust="spacing" xml:space="preserve">144</text>
<text x="286.6" y="422.9" font-family="'DejaVu Sans','Liberation Sans',sans-serif" font-weight="normal" font-size="8.3" fill="#eef02a" stroke="#eef02a" stroke-width="0.32" textLength="24.7" lengthAdjust="spacing" xml:space="preserve">681m</text>
<text x="341.5" y="400.3" font-family="'DejaVu Sans','Liberation Sans',sans-serif" font-weight="normal" font-size="8.3" fill="#f2f2f2" stroke="#f2f2f2" stroke-width="0.32" textLength="26.7" lengthAdjust="spacing" xml:space="preserve">800ns</text>
<rect x="340.6" y="403.6" width="6.2" height="7" rx="1" fill="#f0a020"/>
<text x="343.7" y="409.9" text-anchor="middle" font-family="'DejaVu Sans','Liberation Sans',sans-serif" font-weight="bold" font-size="6.6" fill="#3a1800">T</text>
<path d="M347 407h5.4M350.6 405.4l2 1.6l-2 1.6" stroke="#f0a020" stroke-width="1" fill="none"/>
<path d="M353.6 405h6.6l-3.3 3.6z" fill="#f0a020"/>
<text x="361.6" y="410" font-family="'DejaVu Sans','Liberation Sans',sans-serif" font-weight="normal" font-size="8.3" fill="#f0a020" stroke="#f0a020" stroke-width="0.32" textLength="46.6" lengthAdjust="spacing" xml:space="preserve">16.0000ns</text>
<text x="430" y="400.3" font-family="'DejaVu Sans','Liberation Sans',sans-serif" font-weight="normal" font-size="8.3" fill="#f2f2f2" stroke="#f2f2f2" stroke-width="0.32" textLength="40.6" lengthAdjust="spacing" xml:space="preserve">1.25GS/s</text>
<text x="430" y="410" font-family="'DejaVu Sans','Liberation Sans',sans-serif" font-weight="normal" font-size="8.3" fill="#f2f2f2" stroke="#f2f2f2" stroke-width="0.32" textLength="48.4" lengthAdjust="spacing" xml:space="preserve">10k points</text>
<rect x="509" y="392.9" width="14.4" height="9.2" rx="4.6" fill="#ecec1c"/>
<text x="516" y="400.7" text-anchor="middle" font-family="'Liberation Sans','DejaVu Sans',sans-serif" font-size="9.2" fill="#111" stroke="#111" stroke-width="0.3">1</text>
<path d="M530.6 400.4h2.6l2-5.8h2.8" stroke="#f2f2f2" stroke-width="1.2" fill="none"/>
<text x="556.6" y="400.3" font-family="'DejaVu Sans','Liberation Sans',sans-serif" font-weight="normal" font-size="8.3" fill="#f2f2f2" stroke="#f2f2f2" stroke-width="0.32" textLength="29" lengthAdjust="spacing" xml:space="preserve">24.0 V</text>
<text x="533.9" y="434.7" font-family="'DejaVu Sans','Liberation Sans',sans-serif" font-weight="normal" font-size="8.3" fill="#f2f2f2" stroke="#f2f2f2" stroke-width="0.32" textLength="52.1" lengthAdjust="spacing" xml:space="preserve">9 Sep  2022</text>
<text x="528.8" y="443.9" font-family="'DejaVu Sans','Liberation Sans',sans-serif" font-weight="normal" font-size="8.3" fill="#f2f2f2" stroke="#f2f2f2" stroke-width="0.32" textLength="39.2" lengthAdjust="spacing" xml:space="preserve">16:13:19</text>
</g>
<g transform="translate(595,0)">
<rect x="6" y="8" width="584" height="439" fill="#3f4ba0"/>
<rect x="76" y="8" width="455" height="10" fill="#020204"/>
<rect x="17.5" y="17.5" width="571" height="373" fill="#000" stroke="#98aae6" stroke-width="1"/>
<text x="6.5" y="16.3" font-family="'DejaVu Sans','Liberation Sans',sans-serif" font-weight="bold" font-size="10.2" fill="#05060c" stroke="#05060c" stroke-width="0.45" textLength="16.2" lengthAdjust="spacingAndGlyphs">Tek</text>
<text x="25.6" y="15" font-family="'DejaVu Sans','Liberation Sans',sans-serif" font-size="7.8" fill="#e8ecff" stroke="#e8ecff" stroke-width="0.35" textLength="20.4" lengthAdjust="spacing">Stop</text>
<path d="M74.7 25.1h1M74.7 32.5h1M74.7 40h1M74.7 47.4h1M74.7 54.9h1M74.7 62.3h1M74.7 69.8h1M74.7 77.2h1M74.7 84.7h1M74.7 92.1h1M74.7 99.6h1M74.7 107h1M74.7 114.4h1M74.7 121.9h1M74.7 129.3h1M74.7 136.8h1M74.7 144.2h1M74.7 151.7h1M74.7 159.2h1M74.7 166.6h1M74.7 174h1M74.7 181.5h1M74.7 188.9h1M74.7 196.4h1M74.7 203.8h1M74.7 211.3h1M74.7 218.8h1M74.7 226.2h1M74.7 233.7h1M74.7 241.1h1M74.7 248.5h1M74.7 256h1M74.7 263.4h1M74.7 270.9h1M74.7 278.4h1M74.7 285.8h1M74.7 293.2h1M74.7 300.7h1M74.7 308.2h1M74.7 315.6h1M74.7 323.1h1M74.7 330.5h1M74.7 338h1M74.7 345.4h1M74.7 352.9h1M74.7 360.3h1M74.7 367.8h1M74.7 375.2h1M74.7 382.7h1M131.8 25.1h1M131.8 32.5h1M131.8 40h1M131.8 47.4h1M131.8 54.9h1M131.8 62.3h1M131.8 69.8h1M131.8 77.2h1M131.8 84.7h1M131.8 92.1h1M131.8 99.6h1M131.8 107h1M131.8 114.4h1M131.8 121.9h1M131.8 129.3h1M131.8 136.8h1M131.8 144.2h1M131.8 151.7h1M131.8 159.2h1M131.8 166.6h1M131.8 174h1M131.8 181.5h1M131.8 188.9h1M131.8 196.4h1M131.8 203.8h1M131.8 211.3h1M131.8 218.8h1M131.8 226.2h1M131.8 233.7h1M131.8 241.1h1M131.8 248.5h1M131.8 256h1M131.8 263.4h1M131.8 270.9h1M131.8 278.4h1M131.8 285.8h1M131.8 293.2h1M131.8 300.7h1M131.8 308.2h1M131.8 315.6h1M131.8 323.1h1M131.8 330.5h1M131.8 338h1M131.8 345.4h1M131.8 352.9h1M131.8 360.3h1M131.8 367.8h1M131.8 375.2h1M131.8 382.7h1M188.8 25.1h1M188.8 32.5h1M188.8 40h1M188.8 47.4h1M188.8 54.9h1M188.8 62.3h1M188.8 69.8h1M188.8 77.2h1M188.8 84.7h1M188.8 92.1h1M188.8 99.6h1M188.8 107h1M188.8 114.4h1M188.8 121.9h1M188.8 129.3h1M188.8 136.8h1M188.8 144.2h1M188.8 151.7h1M188.8 159.2h1M188.8 166.6h1M188.8 174h1M188.8 181.5h1M188.8 188.9h1M188.8 196.4h1M188.8 203.8h1M188.8 211.3h1M188.8 218.8h1M188.8 226.2h1M188.8 233.7h1M188.8 241.1h1M188.8 248.5h1M188.8 256h1M188.8 263.4h1M188.8 270.9h1M188.8 278.4h1M188.8 285.8h1M188.8 293.2h1M188.8 300.7h1M188.8 308.2h1M188.8 315.6h1M188.8 323.1h1M188.8 330.5h1M188.8 338h1M188.8 345.4h1M188.8 352.9h1M188.8 360.3h1M188.8 367.8h1M188.8 375.2h1M188.8 382.7h1M245.9 25.1h1M245.9 32.5h1M245.9 40h1M245.9 47.4h1M245.9 54.9h1M245.9 62.3h1M245.9 69.8h1M245.9 77.2h1M245.9 84.7h1M245.9 92.1h1M245.9 99.6h1M245.9 107h1M245.9 114.4h1M245.9 121.9h1M245.9 129.3h1M245.9 136.8h1M245.9 144.2h1M245.9 151.7h1M245.9 159.2h1M245.9 166.6h1M245.9 174h1M245.9 181.5h1M245.9 188.9h1M245.9 196.4h1M245.9 203.8h1M245.9 211.3h1M245.9 218.8h1M245.9 226.2h1M245.9 233.7h1M245.9 241.1h1M245.9 248.5h1M245.9 256h1M245.9 263.4h1M245.9 270.9h1M245.9 278.4h1M245.9 285.8h1M245.9 293.2h1M245.9 300.7h1M245.9 308.2h1M245.9 315.6h1M245.9 323.1h1M245.9 330.5h1M245.9 338h1M245.9 345.4h1M245.9 352.9h1M245.9 360.3h1M245.9 367.8h1M245.9 375.2h1M245.9 382.7h1M359.9 25.1h1M359.9 32.5h1M359.9 40h1M359.9 47.4h1M359.9 54.9h1M359.9 62.3h1M359.9 69.8h1M359.9 77.2h1M359.9 84.7h1M359.9 92.1h1M359.9 99.6h1M359.9 107h1M359.9 114.4h1M359.9 121.9h1M359.9 129.3h1M359.9 136.8h1M359.9 144.2h1M359.9 151.7h1M359.9 159.2h1M359.9 166.6h1M359.9 174h1M359.9 181.5h1M359.9 188.9h1M359.9 196.4h1M359.9 203.8h1M359.9 211.3h1M359.9 218.8h1M359.9 226.2h1M359.9 233.7h1M359.9 241.1h1M359.9 248.5h1M359.9 256h1M359.9 263.4h1M359.9 270.9h1M359.9 278.4h1M359.9 285.8h1M359.9 293.2h1M359.9 300.7h1M359.9 308.2h1M359.9 315.6h1M359.9 323.1h1M359.9 330.5h1M359.9 338h1M359.9 345.4h1M359.9 352.9h1M359.9 360.3h1M359.9 367.8h1M359.9 375.2h1M359.9 382.7h1M417 25.1h1M417 32.5h1M417 40h1M417 47.4h1M417 54.9h1M417 62.3h1M417 69.8h1M417 77.2h1M417 84.7h1M417 92.1h1M417 99.6h1M417 107h1M417 114.4h1M417 121.9h1M417 129.3h1M417 136.8h1M417 144.2h1M417 151.7h1M417 159.2h1M417 166.6h1M417 174h1M417 181.5h1M417 188.9h1M417 196.4h1M417 203.8h1M417 211.3h1M417 218.8h1M417 226.2h1M417 233.7h1M417 241.1h1M417 248.5h1M417 256h1M417 263.4h1M417 270.9h1M417 278.4h1M417 285.8h1M417 293.2h1M417 300.7h1M417 308.2h1M417 315.6h1M417 323.1h1M417 330.5h1M417 338h1M417 345.4h1M417 352.9h1M417 360.3h1M417 367.8h1M417 375.2h1M417 382.7h1M474 25.1h1M474 32.5h1M474 40h1M474 47.4h1M474 54.9h1M474 62.3h1M474 69.8h1M474 77.2h1M474 84.7h1M474 92.1h1M474 99.6h1M474 107h1M474 114.4h1M474 121.9h1M474 129.3h1M474 136.8h1M474 144.2h1M474 151.7h1M474 159.2h1M474 166.6h1M474 174h1M474 181.5h1M474 188.9h1M474 196.4h1M474 203.8h1M474 211.3h1M474 218.8h1M474 226.2h1M474 233.7h1M474 241.1h1M474 248.5h1M474 256h1M474 263.4h1M474 270.9h1M474 278.4h1M474 285.8h1M474 293.2h1M474 300.7h1M474 308.2h1M474 315.6h1M474 323.1h1M474 330.5h1M474 338h1M474 345.4h1M474 352.9h1M474 360.3h1M474 367.8h1M474 375.2h1M474 382.7h1M531.1 25.1h1M531.1 32.5h1M531.1 40h1M531.1 47.4h1M531.1 54.9h1M531.1 62.3h1M531.1 69.8h1M531.1 77.2h1M531.1 84.7h1M531.1 92.1h1M531.1 99.6h1M531.1 107h1M531.1 114.4h1M531.1 121.9h1M531.1 129.3h1M531.1 136.8h1M531.1 144.2h1M531.1 151.7h1M531.1 159.2h1M531.1 166.6h1M531.1 174h1M531.1 181.5h1M531.1 188.9h1M531.1 196.4h1M531.1 203.8h1M531.1 211.3h1M531.1 218.8h1M531.1 226.2h1M531.1 233.7h1M531.1 241.1h1M531.1 248.5h1M531.1 256h1M531.1 263.4h1M531.1 270.9h1M531.1 278.4h1M531.1 285.8h1M531.1 293.2h1M531.1 300.7h1M531.1 308.2h1M531.1 315.6h1M531.1 323.1h1M531.1 330.5h1M531.1 338h1M531.1 345.4h1M531.1 352.9h1M531.1 360.3h1M531.1 367.8h1M531.1 375.2h1M531.1 382.7h1M29.1 54.9h1M40.5 54.9h1M51.9 54.9h1M63.3 54.9h1M74.7 54.9h1M86.1 54.9h1M97.6 54.9h1M109 54.9h1M120.4 54.9h1M131.8 54.9h1M143.2 54.9h1M154.6 54.9h1M166 54.9h1M177.4 54.9h1M188.8 54.9h1M200.2 54.9h1M211.6 54.9h1M223 54.9h1M234.5 54.9h1M245.9 54.9h1M257.3 54.9h1M268.7 54.9h1M280.1 54.9h1M291.5 54.9h1M302.9 54.9h1M314.3 54.9h1M325.7 54.9h1M337.1 54.9h1M348.5 54.9h1M359.9 54.9h1M371.3 54.9h1M382.8 54.9h1M394.2 54.9h1M405.6 54.9h1M417 54.9h1M428.4 54.9h1M439.8 54.9h1M451.2 54.9h1M462.6 54.9h1M474 54.9h1M485.4 54.9h1M496.8 54.9h1M508.2 54.9h1M519.7 54.9h1M531.1 54.9h1M542.5 54.9h1M553.9 54.9h1M565.3 54.9h1M576.7 54.9h1M29.1 92.1h1M40.5 92.1h1M51.9 92.1h1M63.3 92.1h1M74.7 92.1h1M86.1 92.1h1M97.6 92.1h1M109 92.1h1M120.4 92.1h1M131.8 92.1h1M143.2 92.1h1M154.6 92.1h1M166 92.1h1M177.4 92.1h1M188.8 92.1h1M200.2 92.1h1M211.6 92.1h1M223 92.1h1M234.5 92.1h1M245.9 92.1h1M257.3 92.1h1M268.7 92.1h1M280.1 92.1h1M291.5 92.1h1M302.9 92.1h1M314.3 92.1h1M325.7 92.1h1M337.1 92.1h1M348.5 92.1h1M359.9 92.1h1M371.3 92.1h1M382.8 92.1h1M394.2 92.1h1M405.6 92.1h1M417 92.1h1M428.4 92.1h1M439.8 92.1h1M451.2 92.1h1M462.6 92.1h1M474 92.1h1M485.4 92.1h1M496.8 92.1h1M508.2 92.1h1M519.7 92.1h1M531.1 92.1h1M542.5 92.1h1M553.9 92.1h1M565.3 92.1h1M576.7 92.1h1M29.1 129.3h1M40.5 129.3h1M51.9 129.3h1M63.3 129.3h1M74.7 129.3h1M86.1 129.3h1M97.6 129.3h1M109 129.3h1M120.4 129.3h1M131.8 129.3h1M143.2 129.3h1M154.6 129.3h1M166 129.3h1M177.4 129.3h1M188.8 129.3h1M200.2 129.3h1M211.6 129.3h1M223 129.3h1M234.5 129.3h1M245.9 129.3h1M257.3 129.3h1M268.7 129.3h1M280.1 129.3h1M291.5 129.3h1M302.9 129.3h1M314.3 129.3h1M325.7 129.3h1M337.1 129.3h1M348.5 129.3h1M359.9 129.3h1M371.3 129.3h1M382.8 129.3h1M394.2 129.3h1M405.6 129.3h1M417 129.3h1M428.4 129.3h1M439.8 129.3h1M451.2 129.3h1M462.6 129.3h1M474 129.3h1M485.4 129.3h1M496.8 129.3h1M508.2 129.3h1M519.7 129.3h1M531.1 129.3h1M542.5 129.3h1M553.9 129.3h1M565.3 129.3h1M576.7 129.3h1M29.1 166.6h1M40.5 166.6h1M51.9 166.6h1M63.3 166.6h1M74.7 166.6h1M86.1 166.6h1M97.6 166.6h1M109 166.6h1M120.4 166.6h1M131.8 166.6h1M143.2 166.6h1M154.6 166.6h1M166 166.6h1M177.4 166.6h1M188.8 166.6h1M200.2 166.6h1M211.6 166.6h1M223 166.6h1M234.5 166.6h1M245.9 166.6h1M257.3 166.6h1M268.7 166.6h1M280.1 166.6h1M291.5 166.6h1M302.9 166.6h1M314.3 166.6h1M325.7 166.6h1M337.1 166.6h1M348.5 166.6h1M359.9 166.6h1M371.3 166.6h1M382.8 166.6h1M394.2 166.6h1M405.6 166.6h1M417 166.6h1M428.4 166.6h1M439.8 166.6h1M451.2 166.6h1M462.6 166.6h1M474 166.6h1M485.4 166.6h1M496.8 166.6h1M508.2 166.6h1M519.7 166.6h1M531.1 166.6h1M542.5 166.6h1M553.9 166.6h1M565.3 166.6h1M576.7 166.6h1M29.1 241.1h1M40.5 241.1h1M51.9 241.1h1M63.3 241.1h1M74.7 241.1h1M86.1 241.1h1M97.6 241.1h1M109 241.1h1M120.4 241.1h1M131.8 241.1h1M143.2 241.1h1M154.6 241.1h1M166 241.1h1M177.4 241.1h1M188.8 241.1h1M200.2 241.1h1M211.6 241.1h1M223 241.1h1M234.5 241.1h1M245.9 241.1h1M257.3 241.1h1M268.7 241.1h1M280.1 241.1h1M291.5 241.1h1M302.9 241.1h1M314.3 241.1h1M325.7 241.1h1M337.1 241.1h1M348.5 241.1h1M359.9 241.1h1M371.3 241.1h1M382.8 241.1h1M394.2 241.1h1M405.6 241.1h1M417 241.1h1M428.4 241.1h1M439.8 241.1h1M451.2 241.1h1M462.6 241.1h1M474 241.1h1M485.4 241.1h1M496.8 241.1h1M508.2 241.1h1M519.7 241.1h1M531.1 241.1h1M542.5 241.1h1M553.9 241.1h1M565.3 241.1h1M576.7 241.1h1M29.1 278.4h1M40.5 278.4h1M51.9 278.4h1M63.3 278.4h1M74.7 278.4h1M86.1 278.4h1M97.6 278.4h1M109 278.4h1M120.4 278.4h1M131.8 278.4h1M143.2 278.4h1M154.6 278.4h1M166 278.4h1M177.4 278.4h1M188.8 278.4h1M200.2 278.4h1M211.6 278.4h1M223 278.4h1M234.5 278.4h1M245.9 278.4h1M257.3 278.4h1M268.7 278.4h1M280.1 278.4h1M291.5 278.4h1M302.9 278.4h1M314.3 278.4h1M325.7 278.4h1M337.1 278.4h1M348.5 278.4h1M359.9 278.4h1M371.3 278.4h1M382.8 278.4h1M394.2 278.4h1M405.6 278.4h1M417 278.4h1M428.4 278.4h1M439.8 278.4h1M451.2 278.4h1M462.6 278.4h1M474 278.4h1M485.4 278.4h1M496.8 278.4h1M508.2 278.4h1M519.7 278.4h1M531.1 278.4h1M542.5 278.4h1M553.9 278.4h1M565.3 278.4h1M576.7 278.4h1M29.1 315.6h1M40.5 315.6h1M51.9 315.6h1M63.3 315.6h1M74.7 315.6h1M86.1 315.6h1M97.6 315.6h1M109 315.6h1M120.4 315.6h1M131.8 315.6h1M143.2 315.6h1M154.6 315.6h1M166 315.6h1M177.4 315.6h1M188.8 315.6h1M200.2 315.6h1M211.6 315.6h1M223 315.6h1M234.5 315.6h1M245.9 315.6h1M257.3 315.6h1M268.7 315.6h1M280.1 315.6h1M291.5 315.6h1M302.9 315.6h1M314.3 315.6h1M325.7 315.6h1M337.1 315.6h1M348.5 315.6h1M359.9 315.6h1M371.3 315.6h1M382.8 315.6h1M394.2 315.6h1M405.6 315.6h1M417 315.6h1M428.4 315.6h1M439.8 315.6h1M451.2 315.6h1M462.6 315.6h1M474 315.6h1M485.4 315.6h1M496.8 315.6h1M508.2 315.6h1M519.7 315.6h1M531.1 315.6h1M542.5 315.6h1M553.9 315.6h1M565.3 315.6h1M576.7 315.6h1M29.1 352.9h1M40.5 352.9h1M51.9 352.9h1M63.3 352.9h1M74.7 352.9h1M86.1 352.9h1M97.6 352.9h1M109 352.9h1M120.4 352.9h1M131.8 352.9h1M143.2 352.9h1M154.6 352.9h1M166 352.9h1M177.4 352.9h1M188.8 352.9h1M200.2 352.9h1M211.6 352.9h1M223 352.9h1M234.5 352.9h1M245.9 352.9h1M257.3 352.9h1M268.7 352.9h1M280.1 352.9h1M291.5 352.9h1M302.9 352.9h1M314.3 352.9h1M325.7 352.9h1M337.1 352.9h1M348.5 352.9h1M359.9 352.9h1M371.3 352.9h1M382.8 352.9h1M394.2 352.9h1M405.6 352.9h1M417 352.9h1M428.4 352.9h1M439.8 352.9h1M451.2 352.9h1M462.6 352.9h1M474 352.9h1M485.4 352.9h1M496.8 352.9h1M508.2 352.9h1M519.7 352.9h1M531.1 352.9h1M542.5 352.9h1M553.9 352.9h1M565.3 352.9h1M576.7 352.9h1" stroke="#424242" stroke-width="1" fill="none"/>
<path d="M74.7 54.9h1M74.7 92.1h1M74.7 129.3h1M74.7 166.6h1M74.7 203.8h1M74.7 241.1h1M74.7 278.4h1M74.7 315.6h1M74.7 352.9h1M131.8 54.9h1M131.8 92.1h1M131.8 129.3h1M131.8 166.6h1M131.8 203.8h1M131.8 241.1h1M131.8 278.4h1M131.8 315.6h1M131.8 352.9h1M188.8 54.9h1M188.8 92.1h1M188.8 129.3h1M188.8 166.6h1M188.8 203.8h1M188.8 241.1h1M188.8 278.4h1M188.8 315.6h1M188.8 352.9h1M245.9 54.9h1M245.9 92.1h1M245.9 129.3h1M245.9 166.6h1M245.9 203.8h1M245.9 241.1h1M245.9 278.4h1M245.9 315.6h1M245.9 352.9h1M302.9 54.9h1M302.9 92.1h1M302.9 129.3h1M302.9 166.6h1M302.9 203.8h1M302.9 241.1h1M302.9 278.4h1M302.9 315.6h1M302.9 352.9h1M359.9 54.9h1M359.9 92.1h1M359.9 129.3h1M359.9 166.6h1M359.9 203.8h1M359.9 241.1h1M359.9 278.4h1M359.9 315.6h1M359.9 352.9h1M417 54.9h1M417 92.1h1M417 129.3h1M417 166.6h1M417 203.8h1M417 241.1h1M417 278.4h1M417 315.6h1M417 352.9h1M474 54.9h1M474 92.1h1M474 129.3h1M474 166.6h1M474 203.8h1M474 241.1h1M474 278.4h1M474 315.6h1M474 352.9h1M531.1 54.9h1M531.1 92.1h1M531.1 129.3h1M531.1 166.6h1M531.1 203.8h1M531.1 241.1h1M531.1 278.4h1M531.1 315.6h1M531.1 352.9h1" stroke="#707070" stroke-width="1" fill="none"/>
<path d="M29.6 18.5v1.6M29.6 389.8v-1.6M18.5 25.1h1.6M587.8 25.1h-1.6M41 18.5v1.6M41 389.8v-1.6M18.5 32.5h1.6M587.8 32.5h-1.6M52.4 18.5v1.6M52.4 389.8v-1.6M18.5 40h1.6M587.8 40h-1.6M63.8 18.5v1.6M63.8 389.8v-1.6M18.5 47.4h1.6M587.8 47.4h-1.6M75.2 18.5v3M75.2 389.8v-3M18.5 54.9h3M587.8 54.9h-3M86.6 18.5v1.6M86.6 389.8v-1.6M18.5 62.3h1.6M587.8 62.3h-1.6M98.1 18.5v1.6M98.1 389.8v-1.6M18.5 69.8h1.6M587.8 69.8h-1.6M109.5 18.5v1.6M109.5 389.8v-1.6M18.5 77.2h1.6M587.8 77.2h-1.6M120.9 18.5v1.6M120.9 389.8v-1.6M18.5 84.7h1.6M587.8 84.7h-1.6M132.3 18.5v3M132.3 389.8v-3M18.5 92.1h3M587.8 92.1h-3M143.7 18.5v1.6M143.7 389.8v-1.6M18.5 99.6h1.6M587.8 99.6h-1.6M155.1 18.5v1.6M155.1 389.8v-1.6M18.5 107h1.6M587.8 107h-1.6M166.5 18.5v1.6M166.5 389.8v-1.6M18.5 114.4h1.6M587.8 114.4h-1.6M177.9 18.5v1.6M177.9 389.8v-1.6M18.5 121.9h1.6M587.8 121.9h-1.6M189.3 18.5v3M189.3 389.8v-3M18.5 129.3h3M587.8 129.3h-3M200.7 18.5v1.6M200.7 389.8v-1.6M18.5 136.8h1.6M587.8 136.8h-1.6M212.1 18.5v1.6M212.1 389.8v-1.6M18.5 144.2h1.6M587.8 144.2h-1.6M223.5 18.5v1.6M223.5 389.8v-1.6M18.5 151.7h1.6M587.8 151.7h-1.6M235 18.5v1.6M235 389.8v-1.6M18.5 159.2h1.6M587.8 159.2h-1.6M246.4 18.5v3M246.4 389.8v-3M18.5 166.6h3M587.8 166.6h-3M257.8 18.5v1.6M257.8 389.8v-1.6M18.5 174h1.6M587.8 174h-1.6M269.2 18.5v1.6M269.2 389.8v-1.6M18.5 181.5h1.6M587.8 181.5h-1.6M280.6 18.5v1.6M280.6 389.8v-1.6M18.5 188.9h1.6M587.8 188.9h-1.6M292 18.5v1.6M292 389.8v-1.6M18.5 196.4h1.6M587.8 196.4h-1.6M303.4 18.5v3M303.4 389.8v-3M18.5 203.8h3M587.8 203.8h-3M314.8 18.5v1.6M314.8 389.8v-1.6M18.5 211.3h1.6M587.8 211.3h-1.6M326.2 18.5v1.6M326.2 389.8v-1.6M18.5 218.8h1.6M587.8 218.8h-1.6M337.6 18.5v1.6M337.6 389.8v-1.6M18.5 226.2h1.6M587.8 226.2h-1.6M349 18.5v1.6M349 389.8v-1.6M18.5 233.7h1.6M587.8 233.7h-1.6M360.4 18.5v3M360.4 389.8v-3M18.5 241.1h3M587.8 241.1h-3M371.8 18.5v1.6M371.8 389.8v-1.6M18.5 248.5h1.6M587.8 248.5h-1.6M383.3 18.5v1.6M383.3 389.8v-1.6M18.5 256h1.6M587.8 256h-1.6M394.7 18.5v1.6M394.7 389.8v-1.6M18.5 263.4h1.6M587.8 263.4h-1.6M406.1 18.5v1.6M406.1 389.8v-1.6M18.5 270.9h1.6M587.8 270.9h-1.6M417.5 18.5v3M417.5 389.8v-3M18.5 278.4h3M587.8 278.4h-3M428.9 18.5v1.6M428.9 389.8v-1.6M18.5 285.8h1.6M587.8 285.8h-1.6M440.3 18.5v1.6M440.3 389.8v-1.6M18.5 293.2h1.6M587.8 293.2h-1.6M451.7 18.5v1.6M451.7 389.8v-1.6M18.5 300.7h1.6M587.8 300.7h-1.6M463.1 18.5v1.6M463.1 389.8v-1.6M18.5 308.2h1.6M587.8 308.2h-1.6M474.5 18.5v3M474.5 389.8v-3M18.5 315.6h3M587.8 315.6h-3M485.9 18.5v1.6M485.9 389.8v-1.6M18.5 323.1h1.6M587.8 323.1h-1.6M497.3 18.5v1.6M497.3 389.8v-1.6M18.5 330.5h1.6M587.8 330.5h-1.6M508.7 18.5v1.6M508.7 389.8v-1.6M18.5 338h1.6M587.8 338h-1.6M520.2 18.5v1.6M520.2 389.8v-1.6M18.5 345.4h1.6M587.8 345.4h-1.6M531.6 18.5v3M531.6 389.8v-3M18.5 352.9h3M587.8 352.9h-3M543 18.5v1.6M543 389.8v-1.6M18.5 360.3h1.6M587.8 360.3h-1.6M554.4 18.5v1.6M554.4 389.8v-1.6M18.5 367.8h1.6M587.8 367.8h-1.6M565.8 18.5v1.6M565.8 389.8v-1.6M18.5 375.2h1.6M587.8 375.2h-1.6M577.2 18.5v1.6M577.2 389.8v-1.6M18.5 382.7h1.6M587.8 382.7h-1.6" stroke="#707888" stroke-width="0.8" fill="none"/>
<path d="M18 203.5H588M303.5 18V390" stroke="#3e3e3a" stroke-width="1" fill="none"/>
<path d="M29.6 201.5v4M301.5 25.1h4M41 201.5v4M301.5 32.5h4M52.4 201.5v4M301.5 40h4M63.8 201.5v4M301.5 47.4h4M75.2 200.5v6M300.5 54.9h6M86.6 201.5v4M301.5 62.3h4M98.1 201.5v4M301.5 69.8h4M109.5 201.5v4M301.5 77.2h4M120.9 201.5v4M301.5 84.7h4M132.3 200.5v6M300.5 92.1h6M143.7 201.5v4M301.5 99.6h4M155.1 201.5v4M301.5 107h4M166.5 201.5v4M301.5 114.4h4M177.9 201.5v4M301.5 121.9h4M189.3 200.5v6M300.5 129.3h6M200.7 201.5v4M301.5 136.8h4M212.1 201.5v4M301.5 144.2h4M223.5 201.5v4M301.5 151.7h4M235 201.5v4M301.5 159.2h4M246.4 200.5v6M300.5 166.6h6M257.8 201.5v4M301.5 174h4M269.2 201.5v4M301.5 181.5h4M280.6 201.5v4M301.5 188.9h4M292 201.5v4M301.5 196.4h4M303.4 200.5v6M300.5 203.8h6M314.8 201.5v4M301.5 211.3h4M326.2 201.5v4M301.5 218.8h4M337.6 201.5v4M301.5 226.2h4M349 201.5v4M301.5 233.7h4M360.4 200.5v6M300.5 241.1h6M371.8 201.5v4M301.5 248.5h4M383.3 201.5v4M301.5 256h4M394.7 201.5v4M301.5 263.4h4M406.1 201.5v4M301.5 270.9h4M417.5 200.5v6M300.5 278.4h6M428.9 201.5v4M301.5 285.8h4M440.3 201.5v4M301.5 293.2h4M451.7 201.5v4M301.5 300.7h4M463.1 201.5v4M301.5 308.2h4M474.5 200.5v6M300.5 315.6h6M485.9 201.5v4M301.5 323.1h4M497.3 201.5v4M301.5 330.5h4M508.7 201.5v4M301.5 338h4M520.2 201.5v4M301.5 345.4h4M531.6 200.5v6M300.5 352.9h6M543 201.5v4M301.5 360.3h4M554.4 201.5v4M301.5 367.8h4M565.8 201.5v4M301.5 375.2h4M577.2 201.5v4M301.5 382.7h4" stroke="#8a8a84" stroke-width="0.8" fill="none"/>
<path d="M167 8.5V17.5M440.5 8.5V17.5" stroke="#9094a0" stroke-width="0.9" fill="none"/>
<path d="M167.5 12.6H231" stroke="#a9a848" stroke-width="1.2" fill="none"/>
<path d="M231 12.6H440" stroke="#c8a038" stroke-width="1.2" fill="none"/>
<path d="M229.1 11.2h4.6v4.2l-2.3 2l-2.3-2z" fill="#f0a020"/>
<path d="M230.9 12v4.2" stroke="#3a1800" stroke-width="1.1"/>
<path d="M301.2 8.2h4.4l-2.2 2.6z" fill="#f0a020"/>
<path d="M300 17.2h6.8l-3.4 4.4z" fill="#f0a020"/>
<path d="M148.5 21.6h7.8v5.4l-3.9 3.2l-3.9-3.2z" fill="#f0a020"/>
<text x="152.4" y="28.2" text-anchor="middle" font-family="'DejaVu Sans','Liberation Sans',sans-serif" font-weight="bold" font-size="7.4" fill="#2a1000">T</text>
<polyline points="153.1,345.5 153.3,316.4 153.4,287.8 153.5,259.8 153.5,232.9 153.6,207.4 153.6,183.7 153.7,162 153.7,142.6 153.8,125.8 154,111.7 154.2,100.6 154.5,92.5 155,87.6 155.6,86 155.9,88.9 156.2,96 156.5,107.4 156.8,122.9 157.1,141.1 157.4,159.9 157.7,179.4 157.9,197.5 158.2,211.6 158.5,224.2 158.8,231.7 159.1,233.9 159.4,231.8 159.7,227.4 160,218 160.3,206.7 160.6,193.3 160.9,179.3 161.2,165.2 161.5,152.2 161.8,140.2 162.1,131.5 162.4,126.5 162.7,124.8 162.9,126.3 163.2,131.6 163.5,138.6 163.8,148.6 164.1,159.6 164.4,170.4 164.7,183.8 165,195.5 165.3,204.4 165.6,211.7 165.9,215.8 166.2,218.1 166.5,216.4 166.8,213 167.1,209 167.3,202.9 167.6,194.9 167.9,186.9 168.2,178.6 168.5,172.3 168.8,165.3 169.1,160 169.4,156.9 169.7,156.1" fill="none" stroke="#b6b028" stroke-width="0.9" stroke-linejoin="round"/>
<polyline points="467.4,178.4 467.9,300 468.4,358.5" fill="none" stroke="#b6b028" stroke-width="0.9" stroke-linejoin="round"/>
<polyline points="169.7,156.1 170,157.2 170.3,158.5 170.6,161.7 170.9,166.6 171.2,171.5 171.5,176.3 171.8,182.4 172,187.3 172.3,191.6 172.6,195.2 172.9,197.4 173.2,198.8 173.5,198.2 173.8,196.8 174.1,192.5 174.4,189.6 174.7,184.7 175,180.3 175.3,177.9 175.6,175.6 175.9,170.3 176.2,167.2 176.5,165.7 176.8,165.5 177,164.8 177.3,166 177.6,168.7 177.9,172.4 178.2,173.3 178.5,174.1 178.8,180.3 179.1,182.3 179.4,183.5 179.7,185.3 180,183.5 180.3,187 180.6,187.4 180.9,187.5 181.2,185.4 181.4,182.4 181.7,181.1 182,179.5 182.3,178 182.6,175.6 182.9,174.5 183.2,169.6 183.5,171.5 183.8,171.3 184.1,170 184.4,172.1 184.7,172.3 185,172.8 185.3,174.3 185.6,178.4 185.9,180.2 186.1,182.5 186.4,183.5 186.7,184.2 187,182.9 187.3,184.2 187.6,184 187.9,186.4 188.2,181.9 188.5,180.3 188.8,179.5 189.1,180.8 189.4,177.4 189.7,177.9 190,175.3 190.3,176.5 190.6,172.7 190.8,173.9 191.1,175.4 191.4,174.7 191.7,174.4 192,178.2 192.3,175.5 192.6,177.1 192.9,180.7 193.2,182.3 193.5,180.9 193.8,179.9 194.1,180.2 194.4,180.9 194.7,181.8 195,183.3 195.3,182.4 195.6,181.9 195.8,179.3 196.1,180.2 196.4,179.6 196.7,179 197,177.3 197.3,176.3 197.6,178 197.9,178.5 198.2,176.3 198.5,177.2 198.8,178.5 199.1,179.5 199.4,180.2 199.7,178.5 200,180.7 200.2,178 200.5,177.1 200.8,179.7 201.1,180.9 201.4,178.6 201.7,180.3 202,180.6 202.3,180.1 202.6,180.2 202.9,181 203.2,178.9 203.5,178.3 203.8,179.3 204.1,179.7 204.4,177.6 204.7,179.8 204.9,179 205.2,177.5 205.5,178 205.8,177.1 206.1,179.1 206.4,178.5 206.7,181.1 207,175.3 207.3,177.2 207.6,178.2 207.9,179.6 208.2,178.5 208.5,178.1" fill="none" stroke="#ecec1c" stroke-width="1.2" stroke-linejoin="round"/>
<polyline points="468.4,358.5 469,346" fill="none" stroke="#ecec1c" stroke-width="1.2" stroke-linejoin="round"/>
<path d="M18.3 346.9v1.9M18.9 348.4v5.5M20.7 347.4v4.5M21.3 348.2v1.6M21.9 342.8v-3.8M23.1 341.4v-2.3M26.1 347.5v1.5M26.7 349.2v1.7M27.3 347v3.8M29.2 341.1v-2.2M33.4 346.9v2.9M34 342.3v-4.7M35.8 347.5v2M36.4 341.9v-1.9M38.8 341.8v-1.1M39.4 347.2v3.1M40.6 342.3v-2.2M41.2 340.7v-1M43.6 346.6v2.2M45.4 347.1v4.9M46.6 341.8v-2.5M49.1 342.2v-1.1M50.3 341.6v-2.2M50.9 347v3.3M51.5 349v2.1M55.7 341.2v-1.7M56.9 342.7v-2.1M57.5 342.1v-1.9M58.1 347.2v4.1M58.7 341.2v-2.1M59.9 347v1.8M60.5 342v-2.4M61.1 347.8v3.3M61.7 341.4v-3.5M62.3 349.2v3.6M63.5 341.6v-1.9M64.1 347.7v1.1M65.3 350v1.3M67.2 346.9v2.8M68.4 347v3.3M78 347.3v1.8M78.6 347.2v2.3M81 347.1v1.1M82.8 342.4v-1.3M83.4 347.2v2.2M86.5 341.1v-3.1M87.1 347.1v2.1M87.7 347v1.6M88.3 347.4v7.6M88.9 347.4v2.3M90.7 342.2v-1.2M92.5 341.9v-1.1M93.1 341.3v-3.1M94.3 346.3v1.8M94.9 347.6v3.2M95.5 346.6v2.4M96.1 341.4v-1.9M96.7 347.7v2.2M97.3 347.7v4.3M99.1 341.6v-4.2M100.3 347.7v1.7M101.5 341.8v-2M102.1 340.8v-2.6M102.7 343.2v-2.7M103.3 348.6v1.2M104.6 342.8v-1.8M106.4 342.9v-1.8M107 350.1v3.2M108.2 347.5v2.6M108.8 342.9v-2M110.6 349.1v1.5M111.2 343.4v-1.1M111.8 343v-1.6M112.4 348.1v1.5M113 347.3v1.1M114.2 347.2v2M115.4 347.4v4.2M116 348.3v4M116.6 341.8v-2M117.8 342.7v-4.4M120.8 340.6v-4.2M122 346.7v1.5M122.6 341.1v-4.5M123.2 342v-2.7M126.3 342v-1.2M126.9 346.7v3.1M128.1 347.4v2.2M128.7 346.5v2.3M129.9 347.9v2.1M131.1 348.5v1.5M132.3 342.2v-1.6M132.9 341.6v-3.2M134.1 346.4v1.2M135.9 341.5v-3.6M137.7 341.9v-2.4M138.3 346.6v1.9M139.5 342v-2.6M140.1 342.4v-2.8M141.9 348.3v3.6M144.4 347.5v2.2M145 341.5v-3.2M145.6 348.5v1.1M146.2 347.4v5.8M147.4 348.6v2.1M148 347.9v1.8M149.2 343.2v-2.2M149.8 340v-4M150.4 341.7v-3.1M151 342.4v-1.2M187.3 179.5v6.7M187.9 181.1v2.1M190.3 180.3v2.6M194 176.5v-4.7M195.2 173.3v-2.9M195.8 179.9v2.8M196.4 174.7v-3.4M197.6 180.8v1.7M198.8 174.1v-1.5M199.4 175.4v-2.4M200 173.8v-2.2M202.4 182.9v1.9M203 176.3v-3.5M207.2 182v2.4M207.8 181.9v1.6M209 175.8v-1.6M209.6 174.1v-2.5M210.2 175.8v-4.3M212 174.8v-2.3M212.6 174.4v-3.6M213.8 176v-1.8M214.4 175.9v-1.7M216.8 174.8v-4M219.2 181.9v1.3M220.5 175.3v-3.6M221.1 180.7v2.6M221.7 175.9v-1.6M223.5 176.2v-1.5M224.1 175.9v-3.5M225.3 182v2.6M225.9 174.7v-2.1M226.5 175.9v-3.6M227.1 175.8v-2.5M229.5 175.7v-2.3M231.3 175.3v-3.3M232.5 181v4M233.1 174.8v-3.7M233.7 175.2v-1M234.3 181v2.8M234.9 181v3.2M236.1 180.6v2.3M236.7 180.8v1.2M237.3 180.9v1.8M237.9 176.1v-1.5M239.1 176v-2.9M240.3 181.6v2.7M240.9 176v-3.5M241.5 180.7v1.7M242.1 176.4v-3.2M243.3 181.8v2.2M247 176.3v-1.2M247.6 182.5v4.2M248.2 183.6v2.5M249.4 174.7v-1.8M251.2 181.4v1.6M251.8 181.4v1.7M253.6 180.7v3.2M254.2 175.8v-3.2M255.4 180.4v1.7M256 176.1v-1.1M256.6 180.6v1.7M257.2 181v2.9M257.8 176.1v-4.1M259.6 182.5v1.7M260.2 175.5v-2.7M260.8 175.1v-5.2M262 173.6v-2.4M263.8 180.8v3.7M265 175.7v-2.1M265.6 174.4v-3.7M266.2 176.2v-2.9M266.8 174.8v-3M267.4 180.8v1.3M269.2 181.4v1.9M269.8 181.2v2.8M272.9 181.3v2.3M273.5 181.8v1.4M274.1 181.2v1.1M275.3 181.1v1.2M275.9 174.3v-2.7M278.3 175.8v-3.5M280.1 181.8v3M280.7 182.1v4.3M281.3 180.3v4.4M281.9 182.5v2.4M283.7 183v2.6M284.3 176.4v-4.8M286.1 181.1v3.9M286.7 180.9v2.9M287.3 180.8v1.8M288.5 181.6v3M289.1 175v-2M289.7 180.8v2.1M290.3 180.1v2.8M290.9 180.5v4.6M293.3 180.9v1.7M293.9 174.9v-1.6M294.5 174.7v-1.2M295.7 175.1v-5.1M296.3 175.4v-1.3M296.9 180.6v4.8M297.5 181.9v2.4M301.8 176v-1.9M302.4 181.5v1.4M304.8 180.9v2.6M305.4 176.7v-1.4M306.6 175.2v-1.7M307.2 181.1v1M308.4 181.4v1.1M309.6 176.6v-2.7M310.8 176.1v-1.9M311.4 176v-3.2M312 176.2v-1.1M312.6 175.7v-2.4M313.2 181.2v1.5M313.8 181.2v2.4M314.4 175.6v-3.5M315 182.4v3.6M316.2 175.8v-3.5M318 181v2.1M319.2 181.6v2.6M321.6 184.2v1.2M322.8 174.8v-2.5M324 175.5v-2.3M325.3 181.3v1.7M327.1 176v-2.5M328.3 174.8v-1.6M328.9 175v-2.7M331.9 175.3v-6.9M332.5 175.4v-1.2M333.1 176.3v-1.6M333.7 183.4v4.3M334.3 173.9v-3.3M334.9 181.4v2.7M336.1 175.7v-1.3M337.9 181.2v3.6M338.5 176.3v-3.8M344.5 180.8v2M346.3 175v-3.3M347.5 175.2v-1.5M348.1 180.8v1.9M349.3 183.2v1.5M350.6 175.9v-1.4M353 180.5v1.4M354.2 180.3v3M356 180.5v2.8M356.6 180.2v2.5M359 181.9v1.9M359.6 175.3v-3.6M360.2 175.9v-1.2M362 181.4v1.4M362.6 175.6v-1.9M364.4 183.3v1.6M365.6 183.4v4.5M366.2 184.1v1.5M367.4 181.9v1.6M368.6 176.1v-2.5M369.2 176.4v-1.8M371 181.3v3.6M371.6 182.2v2.5M372.2 176.7v-2.8M372.8 176.4v-2.8M374 181.8v3.3M374.6 181v1.9M375.2 175.3v-1.4M375.8 182.8v2.3M378.9 180.7v7.5M379.5 180.6v1.2M380.7 180.7v2.6M383.1 180.1v1.6M384.9 175.3v-1.9M385.5 175.4v-1.2M388.5 175v-1M389.7 173.4v-2.8M390.3 175v-1.2M392.1 176.5v-3.7M393.3 175.8v-1.7M394.5 180.6v1.4M395.1 181.9v3.6M395.7 174.9v-1M396.9 181.6v3.8M398.1 181.7v1.2M399.3 183.9v2M399.9 182.8v2.8M400.5 181.5v1.8M402.4 182.2v2.5M403.6 181v1.7M405.4 181.6v3.8M406 181.4v3.7M406.6 176.4v-4M407.2 176.6v-1.8M409.6 176.4v-1.6M410.2 175.2v-2.5M410.8 173.7v-1.3M412 175.3v-1.1M413.2 181.4v1.9M413.8 176.3v-3.1M415.6 181.4v2.5M416.8 174.8v-3M419.8 181v1.9M420.4 180.9v1M421 175.9v-1.6M421.6 180.5v4.4M422.8 180.8v2.2M424.6 176.5v-2.4M425.2 176.1v-3.5M425.8 181.6v1M427.6 181.4v1.6M428.9 180.7v1M430.1 182.1v2.5M431.3 181.9v2.1M431.9 175.9v-3.6M433.7 181v3.6M436.1 181v3.1M436.7 181.1v2.9M437.9 176.7v-3.5M438.5 181.3v5.9M439.1 180.9v1.2M440.9 176.5v-1.3M442.7 182.6v2.6M443.3 174.3v-3.3M443.9 181.9v1.1M444.5 181.5v2.1M446.3 176.5v-6.4M446.9 181.8v1.6M448.1 180.4v2.1M448.7 181v1.4M451.7 176v-4.4M452.9 176.4v-2.8M453.5 181.4v3.9M456.6 175.3v-2M457.2 175.5v-3M457.8 181.8v3.2M458.4 174.6v-2.6M459.6 173.5v-5.4M460.8 180.3v1.6M461.4 181.1v2.3M462.6 180.6v3.3M463.2 175.1v-3.9M463.8 180.4v1.7M465 172.8v-2.3M466.2 175.1v-2.3M468.8 342.2v-1.2M469.4 340.6v-5.6M471.2 342v-1.5M473 346.9v5.2M473.6 346.4v1.1M474.2 347v1.9M474.8 348.4v2.1M475.4 346.8v2.5M476 348.1v4.6M477.2 348.3v4.3M478.5 342.7v-3.3M479.1 342.4v-2.2M480.3 342.1v-1.2M480.9 342v-1.1M483.9 348v4M484.5 342.6v-2.9M486.3 349.1v1.6M490.5 347.6v2.3M492.3 342.8v-1.2M492.9 343.2v-2.6M494.7 348v1.5M495.3 348.3v2M496.5 342.7v-3.5M499.6 342.7v-2.3M500.2 348v2.6M501.4 342.5v-3.8M502 342.1v-3.1M502.6 342.2v-1.6M504.4 346.9v1.8M508.6 349.4v2.6M509.8 349.3v1.4M511 342.4v-2.9M512.2 343.4v-6M513.4 348.7v2.3M515.2 343v-4.2M516.4 347.3v2.2M518.3 347.1v3.2M518.9 342.7v-1.2M521.3 341v-1.9M521.9 342.2v-5.4M522.5 342v-2.8M523.1 342.5v-3.1M524.3 340.6v-3.4M524.9 347.7v3.2M525.5 346.9v3.4M526.1 342.6v-1.2M527.3 347.7v2.6M528.5 350.2v6.8M529.1 348.6v2.8M529.7 348.9v1.7M530.3 340v-1.9M530.9 347.9v2M532.1 348.3v3.4M532.7 348.2v1.1M533.3 348.7v3.2M533.9 348.4v3M534.5 342.1v-3.3M536.3 349.3v5.1M536.9 342.4v-2.7M537.5 343.3v-3.2M538.8 351.3v2.7M541.2 344v-2.1M543.6 343v-2.9M544.2 348.3v3.2M544.8 342.6v-2M545.4 348.1v2.6M546 347.9v1.4M546.6 348.2v2.7M547.2 342.4v-1.2M549.6 343v-1.9M551.4 342.3v-1.2M553.2 347v2.2M555 340.7v-3.8M555.6 342.3v-2.3M556.2 342.7v-2.1M556.8 342.5v-3.7M557.4 349.4v3.3M559.3 347.9v2.1M559.9 347.1v3.2M562.9 347.5v1.4M563.5 347.4v2.1M566.5 347.8v1.7M569.5 343.4v-1.7M570.1 342.6v-3.3M571.9 348v5.5M573.1 347.6v1.5M574.9 342.6v-3.4M578 342.3v-3.1M580.4 343.6v-1.7M583.4 341.6v-1.5M584 343.8v-2.6M584.6 349.1v1.5M585.8 344v-1.9M586.4 344.4v-2" stroke="#d2d01e" stroke-width="0.85" fill="none"/>
<path d="M18.3 341.2 L18.9 342 L19.5 341.5 L20.1 342 L20.7 341.3 L21.3 341.3 L21.9 342.3 L22.5 342.3 L23.1 340.9 L23.7 342.8 L24.3 341.6 L24.9 340.2 L25.5 341.8 L26.1 341.7 L26.7 341 L27.3 341.1 L28 341.6 L28.6 341.9 L29.2 340.6 L29.8 341.4 L30.4 340.5 L31 341.4 L31.6 340.9 L32.2 341.5 L32.8 341.8 L33.4 341.7 L34 341.8 L34.6 341.1 L35.2 341.6 L35.8 340.4 L36.4 341.4 L37 339.2 L37.6 342.2 L38.2 341.8 L38.8 341.3 L39.4 340.7 L40 342.2 L40.6 341.8 L41.2 340.2 L41.8 341.7 L42.4 341.7 L43 340.4 L43.6 341.8 L44.2 339.9 L44.8 340.7 L45.4 341.2 L46 340.5 L46.6 341.3 L47.3 342 L47.9 341.5 L48.5 342.1 L49.1 341.7 L49.7 341.4 L50.3 341.1 L50.9 341 L51.5 340.9 L52.1 340.8 L52.7 341.7 L53.3 341.9 L53.9 341.8 L54.5 342 L55.1 340.9 L55.7 340.7 L56.3 341.9 L56.9 342.2 L57.5 341.6 L58.1 342.1 L58.7 340.7 L59.3 340.9 L59.9 342.3 L60.5 341.5 L61.1 342 L61.7 340.9 L62.3 341.7 L62.9 338.9 L63.5 341.1 L64.1 342.2 L64.7 341 L65.3 341.8 L65.9 341.3 L66.6 342 L67.2 340.6 L67.8 342.2 L68.4 341.6 L69 341.1 L69.6 339.6 L70.2 342 L70.8 342.1 L71.4 341.9 L72 340.2 L72.6 341.9 L73.2 342.3 L73.8 341.6 L74.4 341.6 L75 340.1 L75.6 341.1 L76.2 340.3 L76.8 340.4 L77.4 341.2 L78 342 L78.6 341.7 L79.2 341.6 L79.8 339.1 L80.4 341.4 L81 340.6 L81.6 341.9 L82.2 341.3 L82.8 341.9 L83.4 341.7 L84 342 L84.6 342.7 L85.2 342.9 L85.9 341.8 L86.5 340.6 L87.1 342.3 L87.7 341.4 L88.3 341.8 L88.9 340.8 L89.5 340.6 L90.1 341.6 L90.7 341.7 L91.3 341.9 L91.9 341 L92.5 341.4 L93.1 340.8 L93.7 341.1 L94.3 340.4 L94.9 341.4 L95.5 341.2 L96.1 340.9 L96.7 341.6 L97.3 341.5 L97.9 339.9 L98.5 340.3 L99.1 341.1 L99.7 341.7 L100.3 340.8 L100.9 342 L101.5 341.3 L102.1 340.3 L102.7 342.7 L103.3 342.5 L103.9 342.9 L104.6 342.3 L105.2 342.6 L105.8 342.7 L106.4 342.4 L107 342.7 L107.6 342.3 L108.2 341.9 L108.8 342.4 L109.4 341.7 L110 342.4 L110.6 342.7 L111.2 342.9 L111.8 342.5 L112.4 341.3 L113 342.8 L113.6 341.8 L114.2 340.9 L114.8 342.6 L115.4 342.5 L116 341.9 L116.6 341.3 L117.2 342.4 L117.8 342.2 L118.4 340.2 L119 341.8 L119.6 340.2 L120.2 338.8 L120.8 340.1 L121.4 340.9 L122 341.8 L122.6 340.6 L123.2 341.5 L123.9 340.6 L124.5 340.2 L125.1 341.2 L125.7 341.4 L126.3 341.5 L126.9 341 L127.5 341.4 L128.1 341.2 L128.7 341.9 L129.3 341.8 L129.9 341.6 L130.5 341.5 L131.1 339.3 L131.7 341.3 L132.3 341.7 L132.9 341.1 L133.5 340 L134.1 340.6 L134.7 341.7 L135.3 341.6 L135.9 341 L136.5 341.8 L137.1 340.6 L137.7 341.4 L138.3 340.8 L138.9 341.4 L139.5 341.5 L140.1 341.9 L140.7 340.5 L141.3 341.1 L141.9 340.4 L142.5 339.4 L143.2 341.1 L143.8 340.9 L144.4 340.3 L145 341 L145.6 341.5 L146.2 341.3 L146.8 342.5 L147.4 342.3 L148 341.9 L148.6 342.3 L149.2 342.7 L149.8 339.5 L150.4 341.2 L151 341.9 L151.6 342.2 L152.2 341.1 L152.2 347.8 L151.6 347.4 L151 348.8 L150.4 348.8 L149.8 350.7 L149.2 347.8 L148.6 347.9 L148 348.4 L147.4 349.1 L146.8 348.3 L146.2 347.9 L145.6 349 L145 348.2 L144.4 348 L143.8 347.6 L143.2 350.8 L142.5 347.4 L141.9 348.8 L141.3 347.2 L140.7 349 L140.1 347.2 L139.5 348.3 L138.9 346.8 L138.3 347.1 L137.7 347.9 L137.1 347.4 L136.5 348.2 L135.9 347.3 L135.3 347.4 L134.7 347.8 L134.1 346.9 L133.5 347.1 L132.9 348.3 L132.3 346.8 L131.7 347.8 L131.1 349 L130.5 347.9 L129.9 348.4 L129.3 347.5 L128.7 347 L128.1 347.9 L127.5 348.3 L126.9 347.2 L126.3 347.1 L125.7 348.5 L125.1 348.3 L124.5 348.9 L123.9 346.7 L123.2 347.7 L122.6 348.1 L122 347.2 L121.4 346.9 L120.8 348 L120.2 346.8 L119.6 347.5 L119 349.6 L118.4 349.4 L117.8 347.5 L117.2 348.6 L116.6 349.1 L116 348.8 L115.4 347.9 L114.8 348.5 L114.2 347.7 L113.6 348 L113 347.8 L112.4 348.6 L111.8 349.6 L111.2 348.3 L110.6 349.6 L110 350 L109.4 348.7 L108.8 348.5 L108.2 348 L107.6 348.1 L107 350.6 L106.4 348.4 L105.8 350.8 L105.2 350.2 L104.6 348.1 L103.9 348 L103.3 349.1 L102.7 348 L102.1 347.7 L101.5 347.7 L100.9 347.8 L100.3 348.2 L99.7 347.4 L99.1 348.2 L98.5 349 L97.9 347.4 L97.3 348.2 L96.7 348.2 L96.1 347.8 L95.5 347.1 L94.9 348.1 L94.3 346.8 L93.7 346.4 L93.1 346.7 L92.5 348.3 L91.9 348.3 L91.3 348 L90.7 348.3 L90.1 348.7 L89.5 347.2 L88.9 347.9 L88.3 347.9 L87.7 347.5 L87.1 347.6 L86.5 348.3 L85.9 348.3 L85.2 348.4 L84.6 348.2 L84 348.6 L83.4 347.7 L82.8 347.7 L82.2 348.1 L81.6 348.3 L81 347.6 L80.4 347.7 L79.8 347.5 L79.2 348.2 L78.6 347.7 L78 347.8 L77.4 347.6 L76.8 348.4 L76.2 347.5 L75.6 347.8 L75 347.2 L74.4 347.8 L73.8 349.1 L73.2 348.4 L72.6 348 L72 348.9 L71.4 348.2 L70.8 347.6 L70.2 347.5 L69.6 347.7 L69 347.5 L68.4 347.5 L67.8 347.8 L67.2 347.4 L66.6 347.7 L65.9 348 L65.3 350.5 L64.7 347.3 L64.1 348.2 L63.5 347.2 L62.9 348.6 L62.3 349.7 L61.7 348 L61.1 348.3 L60.5 347.3 L59.9 347.5 L59.3 350.1 L58.7 348.6 L58.1 347.7 L57.5 348.9 L56.9 347.9 L56.3 348.8 L55.7 347.5 L55.1 347.2 L54.5 347.3 L53.9 348.4 L53.3 347.4 L52.7 347.4 L52.1 349.5 L51.5 349.5 L50.9 347.5 L50.3 348 L49.7 348.7 L49.1 349.3 L48.5 348.7 L47.9 347.9 L47.3 348.2 L46.6 347.6 L46 347.4 L45.4 347.6 L44.8 349.5 L44.2 348.2 L43.6 347.1 L43 347.1 L42.4 346.9 L41.8 347.6 L41.2 348 L40.6 349.2 L40 348.8 L39.4 347.7 L38.8 346.8 L38.2 349.3 L37.6 347.4 L37 348.4 L36.4 347.1 L35.8 348 L35.2 347.4 L34.6 349.1 L34 347.4 L33.4 347.4 L32.8 347.3 L32.2 348.1 L31.6 347.1 L31 348.1 L30.4 346.9 L29.8 348.1 L29.2 347.9 L28.6 347.3 L28 348.5 L27.3 347.5 L26.7 349.7 L26.1 348 L25.5 347.5 L24.9 347.7 L24.3 347.8 L23.7 349.6 L23.1 348.2 L22.5 348.1 L21.9 348.6 L21.3 348.7 L20.7 347.9 L20.1 348 L19.5 348 L18.9 348.9 L18.3 347.4ZM187.3 177.2 L187.9 176.7 L188.5 177.3 L189.1 175.6 L189.7 176 L190.3 176.8 L190.9 175.9 L191.5 175.4 L192.1 175.4 L192.7 174.6 L193.3 176.1 L194 176 L194.6 176 L195.2 172.8 L195.8 175.5 L196.4 174.2 L197 174.2 L197.6 174.9 L198.2 175.4 L198.8 173.6 L199.4 174.9 L200 173.3 L200.6 175.5 L201.2 173.5 L201.8 175.1 L202.4 175.2 L203 175.8 L203.6 176.4 L204.2 175.7 L204.8 175 L205.4 175.2 L206 174.8 L206.6 176.4 L207.2 176.3 L207.8 175.7 L208.4 173.8 L209 175.3 L209.6 173.6 L210.2 175.3 L210.8 175.8 L211.4 174 L212 174.3 L212.6 173.9 L213.2 175.7 L213.8 175.5 L214.4 175.4 L215 173.6 L215.6 174.9 L216.2 174 L216.8 174.3 L217.4 174.8 L218 175.3 L218.6 175.1 L219.2 174 L219.8 175.6 L220.5 174.8 L221.1 175.6 L221.7 175.4 L222.3 175.5 L222.9 175.4 L223.5 175.7 L224.1 175.4 L224.7 175.1 L225.3 175.2 L225.9 174.2 L226.5 175.4 L227.1 175.3 L227.7 175.5 L228.3 174.9 L228.9 175.2 L229.5 175.2 L230.1 173.5 L230.7 175.3 L231.3 174.8 L231.9 175 L232.5 175.3 L233.1 174.3 L233.7 174.7 L234.3 174.3 L234.9 174.8 L235.5 175.8 L236.1 174.1 L236.7 174.8 L237.3 175.5 L237.9 175.6 L238.5 174.9 L239.1 175.5 L239.7 175.6 L240.3 175.8 L240.9 175.5 L241.5 175.4 L242.1 175.9 L242.7 175.9 L243.3 175.4 L243.9 176.3 L244.5 174 L245.1 175.1 L245.7 175.8 L246.4 176.2 L247 175.8 L247.6 176.1 L248.2 174.4 L248.8 174.6 L249.4 174.2 L250 175.3 L250.6 175.2 L251.2 175.8 L251.8 175.8 L252.4 175.9 L253 175.5 L253.6 175.6 L254.2 175.3 L254.8 174.7 L255.4 174.4 L256 175.6 L256.6 176 L257.2 174.9 L257.8 175.6 L258.4 174 L259 174.2 L259.6 174.1 L260.2 175 L260.8 174.6 L261.4 174.7 L262 173.1 L262.6 174.8 L263.2 174.5 L263.8 174.3 L264.4 173.6 L265 175.2 L265.6 173.9 L266.2 175.7 L266.8 174.3 L267.4 174.2 L268 175.6 L268.6 175.2 L269.2 175.2 L269.8 175.6 L270.4 176.4 L271 173.3 L271.6 175.3 L272.3 176 L272.9 176.2 L273.5 174.5 L274.1 175.2 L274.7 175.9 L275.3 175.9 L275.9 173.8 L276.5 175.8 L277.1 175.1 L277.7 174.9 L278.3 175.3 L278.9 175.9 L279.5 175.7 L280.1 175.7 L280.7 175.1 L281.3 175.4 L281.9 175.8 L282.5 175.6 L283.1 175.5 L283.7 175.7 L284.3 175.9 L284.9 174.8 L285.5 174.4 L286.1 175.3 L286.7 174.8 L287.3 174.6 L287.9 175.3 L288.5 175.1 L289.1 174.5 L289.7 175.6 L290.3 175 L290.9 174.4 L291.5 173.8 L292.1 174.7 L292.7 175 L293.3 173.9 L293.9 174.4 L294.5 174.2 L295.1 174.3 L295.7 174.6 L296.3 174.9 L296.9 174.9 L297.5 175.5 L298.2 174.5 L298.8 175.4 L299.4 174.8 L300 174.7 L300.6 175.2 L301.2 175.3 L301.8 175.5 L302.4 175.1 L303 175 L303.6 175.3 L304.2 175.6 L304.8 174.1 L305.4 176.2 L306 174.7 L306.6 174.7 L307.2 173.8 L307.8 175.4 L308.4 175 L309 174.6 L309.6 176.1 L310.2 175.6 L310.8 175.6 L311.4 175.5 L312 175.7 L312.6 175.2 L313.2 175.6 L313.8 174.1 L314.4 175.1 L315 175.1 L315.6 174.7 L316.2 175.3 L316.8 174.3 L317.4 174.9 L318 175 L318.6 175.8 L319.2 175.7 L319.8 175.7 L320.4 175.5 L321 174.7 L321.6 175.8 L322.2 175.1 L322.8 174.3 L323.4 174.7 L324 175 L324.7 174.2 L325.3 174.9 L325.9 174.2 L326.5 174 L327.1 175.5 L327.7 173.5 L328.3 174.3 L328.9 174.5 L329.5 175.4 L330.1 175 L330.7 174.7 L331.3 173.9 L331.9 174.8 L332.5 174.9 L333.1 175.8 L333.7 174.8 L334.3 173.4 L334.9 175.5 L335.5 173 L336.1 175.2 L336.7 174.8 L337.3 174 L337.9 174.2 L338.5 175.8 L339.1 174.4 L339.7 175.8 L340.3 175.1 L340.9 175.3 L341.5 173.4 L342.1 174 L342.7 175.4 L343.3 175 L343.9 175.4 L344.5 175.8 L345.1 175.4 L345.7 173.5 L346.3 174.5 L346.9 175.3 L347.5 174.7 L348.1 175.6 L348.7 175.7 L349.3 174.6 L349.9 175.9 L350.6 175.4 L351.2 174.9 L351.8 175.4 L352.4 173.1 L353 174.1 L353.6 174.4 L354.2 173.9 L354.8 174 L355.4 174.7 L356 175.1 L356.6 174.6 L357.2 175.6 L357.8 172.3 L358.4 174.8 L359 175.4 L359.6 174.8 L360.2 175.4 L360.8 173.4 L361.4 174.4 L362 176 L362.6 175.1 L363.2 176 L363.8 175.7 L364.4 174.5 L365 176.1 L365.6 175.2 L366.2 176.1 L366.8 175.1 L367.4 174.8 L368 175.3 L368.6 175.6 L369.2 175.9 L369.8 175.4 L370.4 175.2 L371 176.5 L371.6 175.9 L372.2 176.2 L372.8 175.9 L373.4 175.4 L374 176.2 L374.6 175.7 L375.2 174.8 L375.8 175.7 L376.5 175.7 L377.1 175.5 L377.7 175.7 L378.3 175 L378.9 175.4 L379.5 175 L380.1 175.6 L380.7 175.4 L381.3 175.5 L381.9 175.2 L382.5 175.5 L383.1 174.8 L383.7 175.1 L384.3 174.8 L384.9 174.8 L385.5 174.9 L386.1 174.2 L386.7 174.3 L387.3 175.1 L387.9 174.9 L388.5 174.5 L389.1 174.2 L389.7 172.9 L390.3 174.5 L390.9 174.3 L391.5 173 L392.1 176 L392.7 173.5 L393.3 175.3 L393.9 174.7 L394.5 174.3 L395.1 176.1 L395.7 174.4 L396.3 174.9 L396.9 175.5 L397.5 176 L398.1 176.3 L398.7 176.2 L399.3 175.2 L399.9 174.1 L400.5 175.5 L401.1 176.3 L401.7 176.1 L402.4 175.8 L403 175.2 L403.6 175.8 L404.2 174.1 L404.8 175.8 L405.4 175.4 L406 174.5 L406.6 175.9 L407.2 176.1 L407.8 175.7 L408.4 176.1 L409 175.5 L409.6 175.9 L410.2 174.7 L410.8 173.2 L411.4 175.3 L412 174.8 L412.6 176 L413.2 175.5 L413.8 175.8 L414.4 175.2 L415 175.3 L415.6 174.4 L416.2 175.2 L416.8 174.3 L417.4 174 L418 173.3 L418.6 174.8 L419.2 173.3 L419.8 173.8 L420.4 175.6 L421 175.4 L421.6 175.8 L422.2 172.4 L422.8 174.2 L423.4 173.9 L424 175.6 L424.6 176 L425.2 175.6 L425.8 174.8 L426.4 172.1 L427 175.8 L427.6 175.6 L428.2 175.2 L428.9 175.9 L429.5 174.8 L430.1 175.1 L430.7 175.2 L431.3 175.8 L431.9 175.4 L432.5 173.9 L433.1 174.9 L433.7 174.7 L434.3 174.5 L434.9 175.2 L435.5 176.2 L436.1 174.8 L436.7 174.5 L437.3 175.1 L437.9 176.2 L438.5 176.4 L439.1 174.9 L439.7 174.4 L440.3 174.2 L440.9 176 L441.5 175.5 L442.1 176.2 L442.7 175.8 L443.3 173.8 L443.9 175.9 L444.5 175.9 L445.1 176.2 L445.7 174.7 L446.3 176 L446.9 175.1 L447.5 174.5 L448.1 175 L448.7 175.7 L449.3 175.5 L449.9 175.3 L450.5 173.7 L451.1 174.2 L451.7 175.5 L452.3 176 L452.9 175.9 L453.5 174 L454.1 176.2 L454.8 175.6 L455.4 175.8 L456 175 L456.6 174.8 L457.2 175 L457.8 175.9 L458.4 174.1 L459 175.4 L459.6 173 L460.2 175 L460.8 175.1 L461.4 174.3 L462 174.1 L462.6 174.5 L463.2 174.6 L463.8 174.8 L464.4 174.1 L465 172.3 L465.6 173.8 L466.2 174.6 L466.8 173.9 L467.4 174.7 L467.4 180.6 L466.8 181.5 L466.2 180 L465.6 180.9 L465 180.9 L464.4 181.5 L463.8 180.9 L463.2 182.1 L462.6 181.1 L462 181.4 L461.4 181.6 L460.8 180.8 L460.2 180.7 L459.6 180.6 L459 181.9 L458.4 181.2 L457.8 182.3 L457.2 182.1 L456.6 182.4 L456 182.2 L455.4 181 L454.8 181.2 L454.1 181.3 L453.5 181.9 L452.9 182.1 L452.3 182.9 L451.7 181.8 L451.1 182.1 L450.5 181.4 L449.9 182.1 L449.3 182.2 L448.7 181.5 L448.1 180.9 L447.5 181.7 L446.9 182.3 L446.3 182.3 L445.7 182.4 L445.1 182.3 L444.5 182 L443.9 182.4 L443.3 183.2 L442.7 183.1 L442.1 181.7 L441.5 182.3 L440.9 182.6 L440.3 181.4 L439.7 182.2 L439.1 181.4 L438.5 181.8 L437.9 182.2 L437.3 181.9 L436.7 181.6 L436.1 181.5 L435.5 181.9 L434.9 182.7 L434.3 181.4 L433.7 181.5 L433.1 182.3 L432.5 182.3 L431.9 181.7 L431.3 182.4 L430.7 182.3 L430.1 182.6 L429.5 182 L428.9 181.2 L428.2 181.8 L427.6 181.9 L427 182.7 L426.4 181.6 L425.8 182.1 L425.2 181.8 L424.6 181.7 L424 180.9 L423.4 181 L422.8 181.3 L422.2 181.1 L421.6 181 L421 181.8 L420.4 181.4 L419.8 181.5 L419.2 180.5 L418.6 181.8 L418 182.9 L417.4 181.5 L416.8 183.4 L416.2 183.1 L415.6 181.9 L415 181.7 L414.4 181.7 L413.8 181.8 L413.2 181.9 L412.6 182 L412 182.3 L411.4 181.4 L410.8 182.7 L410.2 181.3 L409.6 182.8 L409 181.5 L408.4 181.7 L407.8 181.8 L407.2 182.1 L406.6 181.3 L406 181.9 L405.4 182.1 L404.8 182.1 L404.2 182.2 L403.6 181.5 L403 182.3 L402.4 182.7 L401.7 182.6 L401.1 182 L400.5 182 L399.9 183.3 L399.3 184.4 L398.7 182.2 L398.1 182.2 L397.5 181.8 L396.9 182.1 L396.3 181.4 L395.7 182.3 L395.1 182.4 L394.5 181.1 L393.9 181.5 L393.3 182.5 L392.7 181.3 L392.1 181.9 L391.5 182 L390.9 181 L390.3 180.9 L389.7 182.5 L389.1 180.3 L388.5 182.1 L387.9 182.3 L387.3 181.4 L386.7 181.1 L386.1 182.3 L385.5 182.2 L384.9 181.7 L384.3 180.6 L383.7 181.7 L383.1 180.6 L382.5 183.1 L381.9 181.6 L381.3 181.1 L380.7 181.2 L380.1 182.1 L379.5 181.1 L378.9 181.2 L378.3 182.3 L377.7 181.9 L377.1 181.4 L376.5 183.3 L375.8 183.3 L375.2 183.1 L374.6 181.5 L374 182.3 L373.4 184.5 L372.8 182.4 L372.2 181.8 L371.6 182.7 L371 181.8 L370.4 182.2 L369.8 182.2 L369.2 183.8 L368.6 181.9 L368 181.5 L367.4 182.4 L366.8 182.5 L366.2 184.6 L365.6 183.9 L365 182.3 L364.4 183.8 L363.8 183 L363.2 182.6 L362.6 183.6 L362 181.9 L361.4 181.1 L360.8 181.8 L360.2 181.4 L359.6 181.3 L359 182.4 L358.4 181 L357.8 180.8 L357.2 181.2 L356.6 180.7 L356 181 L355.4 181.5 L354.8 181.5 L354.2 180.8 L353.6 181.4 L353 181 L352.4 183.2 L351.8 182.4 L351.2 182.1 L350.6 181 L349.9 182.8 L349.3 183.7 L348.7 181.4 L348.1 181.3 L347.5 181.9 L346.9 181.5 L346.3 181.6 L345.7 181.4 L345.1 182.6 L344.5 181.3 L343.9 181.3 L343.3 181.3 L342.7 181.3 L342.1 181.4 L341.5 180.7 L340.9 181 L340.3 181.3 L339.7 182.3 L339.1 181.5 L338.5 182.7 L337.9 181.7 L337.3 181.2 L336.7 180.7 L336.1 180.9 L335.5 181.4 L334.9 181.9 L334.3 182.5 L333.7 183.9 L333.1 181.8 L332.5 181.9 L331.9 181 L331.3 181.7 L330.7 181.2 L330.1 180.9 L329.5 181.6 L328.9 181.5 L328.3 181.7 L327.7 181 L327.1 181.4 L326.5 182 L325.9 181.9 L325.3 181.8 L324.7 181.8 L324 181.6 L323.4 181.6 L322.8 183.4 L322.2 181.9 L321.6 184.7 L321 181.4 L320.4 181.1 L319.8 182.1 L319.2 182.1 L318.6 181.8 L318 181.5 L317.4 181.3 L316.8 182.9 L316.2 184 L315.6 181.4 L315 182.9 L314.4 182.6 L313.8 181.7 L313.2 181.7 L312.6 181.5 L312 181.7 L311.4 181.1 L310.8 181.2 L310.2 181.8 L309.6 182.3 L309 182.3 L308.4 181.9 L307.8 181.9 L307.2 181.6 L306.6 182.4 L306 181 L305.4 181.9 L304.8 181.4 L304.2 182.5 L303.6 182.3 L303 181.2 L302.4 182 L301.8 183.3 L301.2 181.8 L300.6 182.5 L300 182.9 L299.4 180.8 L298.8 180.8 L298.2 183.1 L297.5 182.4 L296.9 181.1 L296.3 182 L295.7 182.3 L295.1 181.2 L294.5 180.6 L293.9 184 L293.3 181.4 L292.7 180.6 L292.1 182.5 L291.5 181.4 L290.9 181 L290.3 180.6 L289.7 181.3 L289.1 181.1 L288.5 182.1 L287.9 181.3 L287.3 181.3 L286.7 181.4 L286.1 181.6 L285.5 181.9 L284.9 181.9 L284.3 182.2 L283.7 183.5 L283.1 181.5 L282.5 181.3 L281.9 183 L281.3 180.8 L280.7 182.6 L280.1 182.3 L279.5 181.2 L278.9 182 L278.3 182.8 L277.7 181.5 L277.1 181 L276.5 182.6 L275.9 183.1 L275.3 181.6 L274.7 182.6 L274.1 181.7 L273.5 182.3 L272.9 181.8 L272.3 183.2 L271.6 181.9 L271 182.7 L270.4 183.2 L269.8 181.7 L269.2 181.9 L268.6 181.9 L268 181.4 L267.4 181.3 L266.8 181.3 L266.2 181 L265.6 182.2 L265 180.9 L264.4 180.4 L263.8 181.3 L263.2 180.5 L262.6 180.7 L262 180.7 L261.4 180.6 L260.8 181.5 L260.2 181 L259.6 183 L259 182.3 L258.4 181.6 L257.8 181 L257.2 181.5 L256.6 181.1 L256 181.3 L255.4 180.9 L254.8 182.2 L254.2 181.9 L253.6 181.2 L253 182.5 L252.4 182.4 L251.8 181.9 L251.2 181.9 L250.6 181.9 L250 181.7 L249.4 181.4 L248.8 182.2 L248.2 184.1 L247.6 183 L247 182.9 L246.4 181.8 L245.7 182.2 L245.1 181.8 L244.5 182.5 L243.9 181.6 L243.3 182.3 L242.7 181.9 L242.1 181.2 L241.5 181.2 L240.9 183.2 L240.3 182.1 L239.7 181.4 L239.1 181.4 L238.5 182.3 L237.9 181.4 L237.3 181.4 L236.7 181.3 L236.1 181.1 L235.5 181.9 L234.9 181.5 L234.3 181.5 L233.7 181.6 L233.1 182.2 L232.5 181.5 L231.9 180.5 L231.3 183.1 L230.7 181.5 L230.1 181.5 L229.5 181.4 L228.9 182.7 L228.3 181.4 L227.7 183 L227.1 182.8 L226.5 181.8 L225.9 181.7 L225.3 182.5 L224.7 182.4 L224.1 181.8 L223.5 183 L222.9 181.7 L222.3 181 L221.7 182.4 L221.1 181.2 L220.5 181 L219.8 180.9 L219.2 182.4 L218.6 181.4 L218 181.6 L217.4 181.2 L216.8 181.3 L216.2 182.7 L215.6 181.2 L215 181.1 L214.4 182.2 L213.8 181.5 L213.2 181.6 L212.6 182.6 L212 182.7 L211.4 182.4 L210.8 181.3 L210.2 182.8 L209.6 182 L209 181.1 L208.4 181.3 L207.8 182.4 L207.2 182.5 L206.6 181.5 L206 182.4 L205.4 183.3 L204.8 182.2 L204.2 182.3 L203.6 182.3 L203 182.4 L202.4 183.4 L201.8 182 L201.2 184.4 L200.6 181.3 L200 183.3 L199.4 183 L198.8 182.1 L198.2 181.6 L197.6 181.3 L197 181.5 L196.4 181.2 L195.8 180.4 L195.2 182 L194.6 181.8 L194 180.5 L193.3 182.1 L192.7 180.3 L192.1 180.2 L191.5 180.3 L190.9 181 L190.3 180.8 L189.7 180.5 L189.1 180.6 L188.5 180.7 L187.9 181.6 L187.3 180ZM468.2 341.5 L468.8 341.7 L469.4 340.1 L470 340.6 L470.6 341.4 L471.2 341.5 L471.8 339.7 L472.4 341.2 L473 341.9 L473.6 340.6 L474.2 339.3 L474.8 341.2 L475.4 341.5 L476 340.1 L476.6 341.3 L477.2 342.1 L477.8 342 L478.5 342.2 L479.1 341.9 L479.7 341.8 L480.3 341.6 L480.9 341.5 L481.5 342.5 L482.1 341.8 L482.7 343 L483.3 343 L483.9 341.5 L484.5 342.1 L485.1 340.3 L485.7 341.3 L486.3 341.7 L486.9 342.5 L487.5 341.8 L488.1 342.6 L488.7 341 L489.3 340.3 L489.9 341.3 L490.5 341.5 L491.1 342.2 L491.7 342.5 L492.3 342.3 L492.9 342.7 L493.5 342.2 L494.1 341.3 L494.7 342.2 L495.3 342.8 L495.9 342.4 L496.5 342.2 L497.1 342.7 L497.7 341 L498.4 340.4 L499 342.5 L499.6 342.2 L500.2 341.7 L500.8 342.8 L501.4 342 L502 341.6 L502.6 341.7 L503.2 341.7 L503.8 340.8 L504.4 342.1 L505 341.7 L505.6 342.3 L506.2 342.1 L506.8 342.1 L507.4 341.6 L508 342.6 L508.6 340.8 L509.2 342.2 L509.8 342.7 L510.4 342.3 L511 341.9 L511.6 342.1 L512.2 342.9 L512.8 342.8 L513.4 341.4 L514 342.1 L514.6 341.5 L515.2 342.5 L515.8 342 L516.4 342.3 L517 342.1 L517.6 341.9 L518.3 341.8 L518.9 342.2 L519.5 342 L520.1 341.7 L520.7 340.9 L521.3 340.5 L521.9 341.7 L522.5 341.5 L523.1 342 L523.7 341.9 L524.3 340.1 L524.9 340.3 L525.5 342.1 L526.1 342.1 L526.7 340.4 L527.3 341.6 L527.9 340.3 L528.5 341.7 L529.1 341.2 L529.7 342.1 L530.3 339.5 L530.9 342 L531.5 342.3 L532.1 342.6 L532.7 343.3 L533.3 341.8 L533.9 341.8 L534.5 341.6 L535.1 341.6 L535.7 342.2 L536.3 343.5 L536.9 341.9 L537.5 342.8 L538.2 341 L538.8 343.5 L539.4 343.4 L540 342.7 L540.6 342.8 L541.2 343.5 L541.8 341.8 L542.4 343.2 L543 342.7 L543.6 342.5 L544.2 343.1 L544.8 342.1 L545.4 342.5 L546 341.1 L546.6 342.6 L547.2 341.9 L547.8 340.7 L548.4 342.6 L549 340.9 L549.6 342.5 L550.2 341.2 L550.8 341.6 L551.4 341.8 L552 341 L552.6 342.2 L553.2 341.4 L553.8 340.9 L554.4 341.1 L555 340.2 L555.6 341.8 L556.2 342.2 L556.8 342 L557.4 342 L558.1 342.1 L558.7 342 L559.3 341.7 L559.9 342.1 L560.5 341.7 L561.1 341.8 L561.7 342 L562.3 342.1 L562.9 342.6 L563.5 342 L564.1 343 L564.7 342.7 L565.3 342.7 L565.9 342.6 L566.5 341.5 L567.1 341.1 L567.7 342.6 L568.3 342.8 L568.9 342.3 L569.5 342.9 L570.1 342.1 L570.7 342 L571.3 342.5 L571.9 341.4 L572.5 342.6 L573.1 342.2 L573.7 341.4 L574.3 342.5 L574.9 342.1 L575.5 341.8 L576.1 342 L576.7 341.8 L577.3 342.5 L578 341.8 L578.6 342.7 L579.2 342.4 L579.8 343.1 L580.4 343.1 L581 342.9 L581.6 342.4 L582.2 343.1 L582.8 343.6 L583.4 341.1 L584 343.3 L584.6 342.6 L585.2 343.2 L585.8 343.5 L586.4 343.9 L587 341 L587.6 341.2 L587.6 348.6 L587 348.7 L586.4 349.6 L585.8 350 L585.2 350.6 L584.6 349.6 L584 349.3 L583.4 349.1 L582.8 349.7 L582.2 350.5 L581.6 349 L581 348.8 L580.4 349.4 L579.8 348.7 L579.2 349.7 L578.6 348.9 L578 348.7 L577.3 348 L576.7 347.9 L576.1 349.3 L575.5 348.2 L574.9 348 L574.3 348.4 L573.7 348.7 L573.1 348.1 L572.5 349.5 L571.9 348.5 L571.3 348.4 L570.7 349.1 L570.1 350.8 L569.5 348.8 L568.9 349.7 L568.3 349.5 L567.7 350.3 L567.1 349.7 L566.5 348.3 L565.9 348.5 L565.3 349 L564.7 350 L564.1 348.4 L563.5 347.9 L562.9 348 L562.3 349 L561.7 347.7 L561.1 348.2 L560.5 348.9 L559.9 347.6 L559.3 348.4 L558.7 348.2 L558.1 348.5 L557.4 349.9 L556.8 348 L556.2 350.5 L555.6 347.6 L555 348.6 L554.4 349.5 L553.8 348.9 L553.2 347.5 L552.6 347.5 L552 348 L551.4 347.7 L550.8 348.1 L550.2 349.2 L549.6 351.3 L549 348.2 L548.4 348.7 L547.8 348.7 L547.2 350 L546.6 348.7 L546 348.4 L545.4 348.6 L544.8 350 L544.2 348.8 L543.6 350.9 L543 351 L542.4 350.5 L541.8 350.9 L541.2 348.8 L540.6 349.8 L540 349.4 L539.4 350 L538.8 351.8 L538.2 349 L537.5 349.6 L536.9 349 L536.3 349.8 L535.7 348.7 L535.1 349.8 L534.5 349.4 L533.9 348.9 L533.3 349.2 L532.7 348.7 L532.1 348.8 L531.5 349.5 L530.9 348.4 L530.3 348.4 L529.7 349.4 L529.1 349.1 L528.5 350.7 L527.9 348.1 L527.3 348.2 L526.7 347.9 L526.1 348 L525.5 347.4 L524.9 348.2 L524.3 347.4 L523.7 348.9 L523.1 347.6 L522.5 347.5 L521.9 347.6 L521.3 348.4 L520.7 347.3 L520.1 348.5 L519.5 347.7 L518.9 347.7 L518.3 347.6 L517.6 349.9 L517 348.5 L516.4 347.8 L515.8 347.9 L515.2 347.9 L514.6 349.6 L514 348.3 L513.4 349.2 L512.8 349.3 L512.2 348.3 L511.6 350 L511 350.5 L510.4 349.4 L509.8 349.8 L509.2 349.2 L508.6 349.9 L508 349.1 L507.4 349.5 L506.8 351.7 L506.2 348.2 L505.6 348 L505 348.4 L504.4 347.4 L503.8 350 L503.2 348.2 L502.6 348.5 L502 348.1 L501.4 348.2 L500.8 348.1 L500.2 348.5 L499.6 349 L499 349.1 L498.4 348.4 L497.7 347.9 L497.1 348.1 L496.5 348 L495.9 348.6 L495.3 348.8 L494.7 348.5 L494.1 348 L493.5 348.3 L492.9 348.9 L492.3 348.9 L491.7 347.8 L491.1 348.2 L490.5 348.1 L489.9 348.1 L489.3 348.8 L488.7 348.7 L488.1 349.2 L487.5 348.7 L486.9 348.3 L486.3 349.6 L485.7 348.7 L485.1 348.3 L484.5 348.4 L483.9 348.5 L483.3 348.7 L482.7 349.4 L482.1 348.4 L481.5 349.4 L480.9 348.3 L480.3 347.7 L479.7 349.8 L479.1 348.7 L478.5 348.1 L477.8 349.4 L477.2 348.8 L476.6 349 L476 348.6 L475.4 347.3 L474.8 348.9 L474.2 347.5 L473.6 346.9 L473 347.4 L472.4 347.3 L471.8 347 L471.2 348 L470.6 351.1 L470 349 L469.4 348.3 L468.8 349.1 L468.2 348.5Z" fill="#ecec1c"/>
<path d="M581.8 307.5l4.2-3.2v2.5h2.2v1.4h-2.2v2.5z" fill="#ecec1c"/>
<path d="M6 347.2h6.6l3.8 4.6l-3.8 4.6h-6.6z" fill="#ecec1c"/>
<text x="10" y="354.9" text-anchor="middle" font-family="'Liberation Sans','DejaVu Sans',sans-serif" font-size="8.6" fill="#111" stroke="#111" stroke-width="0.3">1</text>
<text x="19.4" y="354.2" font-family="'DejaVu Sans','Liberation Sans',sans-serif" font-size="7.9" fill="#f4f4f4" stroke="#f4f4f4" stroke-width="0.3" textLength="15.6" lengthAdjust="spacingAndGlyphs">Vds</text>
<rect x="17.6" y="391.4" width="316.1" height="11.7" rx="3.2" fill="#030303" stroke="#98a2e2" stroke-width="0.9"/>
<rect x="17.6" y="403.7" width="316.1" height="21.6" rx="3.2" fill="#030303" stroke="#98a2e2" stroke-width="0.9"/>
<rect x="338.6" y="391.8" width="83.5" height="20.8" rx="3.2" fill="#030303" stroke="#98a2e2" stroke-width="0.9"/>
<rect x="427" y="391.8" width="60" height="20.8" rx="3.2" fill="#030303" stroke="#98a2e2" stroke-width="0.9"/>
<rect x="491.6" y="391.8" width="96.9" height="20.8" rx="3.2" fill="#030303" stroke="#98a2e2" stroke-width="0.9"/>
<rect x="525.3" y="424.6" width="63.2" height="21.2" rx="3.2" fill="#030303" stroke="#98a2e2" stroke-width="0.9"/>
<rect x="21" y="392.9" width="14.4" height="9.2" rx="4.6" fill="#ecec1c"/>
<text x="28" y="400.7" text-anchor="middle" font-family="'Liberation Sans','DejaVu Sans',sans-serif" font-size="9.2" fill="#111" stroke="#111" stroke-width="0.3">1</text>
<text x="45" y="400.3" font-family="'DejaVu Sans','Liberation Sans',sans-serif" font-weight="normal" font-size="8.3" fill="#eef02a" stroke="#eef02a" stroke-width="0.32" textLength="28.4" lengthAdjust="spacing" xml:space="preserve">20.0 V</text>
<text x="96" y="412.4" font-family="'DejaVu Sans','Liberation Sans',sans-serif" font-weight="normal" font-size="8.3" fill="#f2f2f2" stroke="#f2f2f2" stroke-width="0.32" textLength="24.2" lengthAdjust="spacing" xml:space="preserve">Value</text>
<text x="146.6" y="412.4" font-family="'DejaVu Sans','Liberation Sans',sans-serif" font-weight="normal" font-size="8.3" fill="#f2f2f2" stroke="#f2f2f2" stroke-width="0.32" textLength="23.8" lengthAdjust="spacing" xml:space="preserve">Mean</text>
<text x="193.9" y="412.4" font-family="'DejaVu Sans','Liberation Sans',sans-serif" font-weight="normal" font-size="8.3" fill="#f2f2f2" stroke="#f2f2f2" stroke-width="0.32" textLength="16.8" lengthAdjust="spacing" xml:space="preserve">Min</text>
<text x="240.8" y="412.4" font-family="'DejaVu Sans','Liberation Sans',sans-serif" font-weight="normal" font-size="8.3" fill="#f2f2f2" stroke="#f2f2f2" stroke-width="0.32" textLength="16.9" lengthAdjust="spacing" xml:space="preserve">Max</text>
<text x="286.6" y="412.4" font-family="'DejaVu Sans','Liberation Sans',sans-serif" font-weight="normal" font-size="8.3" fill="#f2f2f2" stroke="#f2f2f2" stroke-width="0.32" textLength="35.3" lengthAdjust="spacing" xml:space="preserve">Std Dev</text>
<rect x="21" y="415.4" width="14.4" height="9.2" rx="4.6" fill="#ecec1c"/>
<text x="28" y="423.2" text-anchor="middle" font-family="'Liberation Sans','DejaVu Sans',sans-serif" font-size="9.2" fill="#111" stroke="#111" stroke-width="0.3">1</text>
<text x="37.8" y="422.9" font-family="'DejaVu Sans','Liberation Sans',sans-serif" font-weight="normal" font-size="8.3" fill="#eef02a" stroke="#eef02a" stroke-width="0.32" textLength="17.2" lengthAdjust="spacing" xml:space="preserve">Max</text>
<text x="97" y="422.9" font-family="'DejaVu Sans','Liberation Sans',sans-serif" font-weight="normal" font-size="8.3" fill="#eef02a" stroke="#eef02a" stroke-width="0.32" textLength="24" lengthAdjust="spacing" xml:space="preserve">143 V</text>
<text x="147" y="422.9" font-family="'DejaVu Sans','Liberation Sans',sans-serif" font-weight="normal" font-size="8.3" fill="#eef02a" stroke="#eef02a" stroke-width="0.32" textLength="15.6" lengthAdjust="spacing" xml:space="preserve">142</text>
<text x="194" y="422.9" font-family="'DejaVu Sans','Liberation Sans',sans-serif" font-weight="normal" font-size="8.3" fill="#eef02a" stroke="#eef02a" stroke-width="0.32" textLength="15.4" lengthAdjust="spacing" xml:space="preserve">141</text>
<text x="240.8" y="422.9" font-family="'DejaVu Sans','Liberation Sans',sans-serif" font-weight="normal" font-size="8.3" fill="#eef02a" stroke="#eef02a" stroke-width="0.32" textLength="15.6" lengthAdjust="spacing" xml:space="preserve">143</text>
<text x="286.6" y="422.9" font-family="'DejaVu Sans','Liberation Sans',sans-serif" font-weight="normal" font-size="8.3" fill="#eef02a" stroke="#eef02a" stroke-width="0.32" textLength="24.7" lengthAdjust="spacing" xml:space="preserve">566m</text>
<text x="341.5" y="400.3" font-family="'DejaVu Sans','Liberation Sans',sans-serif" font-weight="normal" font-size="8.3" fill="#f2f2f2" stroke="#f2f2f2" stroke-width="0.32" textLength="26.7" lengthAdjust="spacing" xml:space="preserve">400ns</text>
<rect x="340.6" y="403.6" width="6.2" height="7" rx="1" fill="#f0a020"/>
<text x="343.7" y="409.9" text-anchor="middle" font-family="'DejaVu Sans','Liberation Sans',sans-serif" font-weight="bold" font-size="6.6" fill="#3a1800">T</text>
<path d="M347 407h5.4M350.6 405.4l2 1.6l-2 1.6" stroke="#f0a020" stroke-width="1" fill="none"/>
<path d="M353.6 405h6.6l-3.3 3.6z" fill="#f0a020"/>
<text x="361.6" y="410" font-family="'DejaVu Sans','Liberation Sans',sans-serif" font-weight="normal" font-size="8.3" fill="#f0a020" stroke="#f0a020" stroke-width="0.32" textLength="46.6" lengthAdjust="spacing" xml:space="preserve">1.05600µs</text>
<text x="430" y="400.3" font-family="'DejaVu Sans','Liberation Sans',sans-serif" font-weight="normal" font-size="8.3" fill="#f2f2f2" stroke="#f2f2f2" stroke-width="0.32" textLength="40.6" lengthAdjust="spacing" xml:space="preserve">2.50GS/s</text>
<text x="430" y="410" font-family="'DejaVu Sans','Liberation Sans',sans-serif" font-weight="normal" font-size="8.3" fill="#f2f2f2" stroke="#f2f2f2" stroke-width="0.32" textLength="48.4" lengthAdjust="spacing" xml:space="preserve">10k points</text>
<rect x="509" y="392.9" width="14.4" height="9.2" rx="4.6" fill="#ecec1c"/>
<text x="516" y="400.7" text-anchor="middle" font-family="'Liberation Sans','DejaVu Sans',sans-serif" font-size="9.2" fill="#111" stroke="#111" stroke-width="0.3">1</text>
<path d="M530.6 400.4h2.6l2-5.8h2.8" stroke="#f2f2f2" stroke-width="1.2" fill="none"/>
<text x="556.6" y="400.3" font-family="'DejaVu Sans','Liberation Sans',sans-serif" font-weight="normal" font-size="8.3" fill="#f2f2f2" stroke="#f2f2f2" stroke-width="0.32" textLength="29" lengthAdjust="spacing" xml:space="preserve">24.0 V</text>
<text x="533.9" y="434.7" font-family="'DejaVu Sans','Liberation Sans',sans-serif" font-weight="normal" font-size="8.3" fill="#f2f2f2" stroke="#f2f2f2" stroke-width="0.32" textLength="52.1" lengthAdjust="spacing" xml:space="preserve">9 Sep  2022</text>
<text x="528.8" y="443.9" font-family="'DejaVu Sans','Liberation Sans',sans-serif" font-weight="normal" font-size="8.3" fill="#f2f2f2" stroke="#f2f2f2" stroke-width="0.32" textLength="39.2" lengthAdjust="spacing" xml:space="preserve">16:13:47</text>
</g>
</svg>
</body></html>
